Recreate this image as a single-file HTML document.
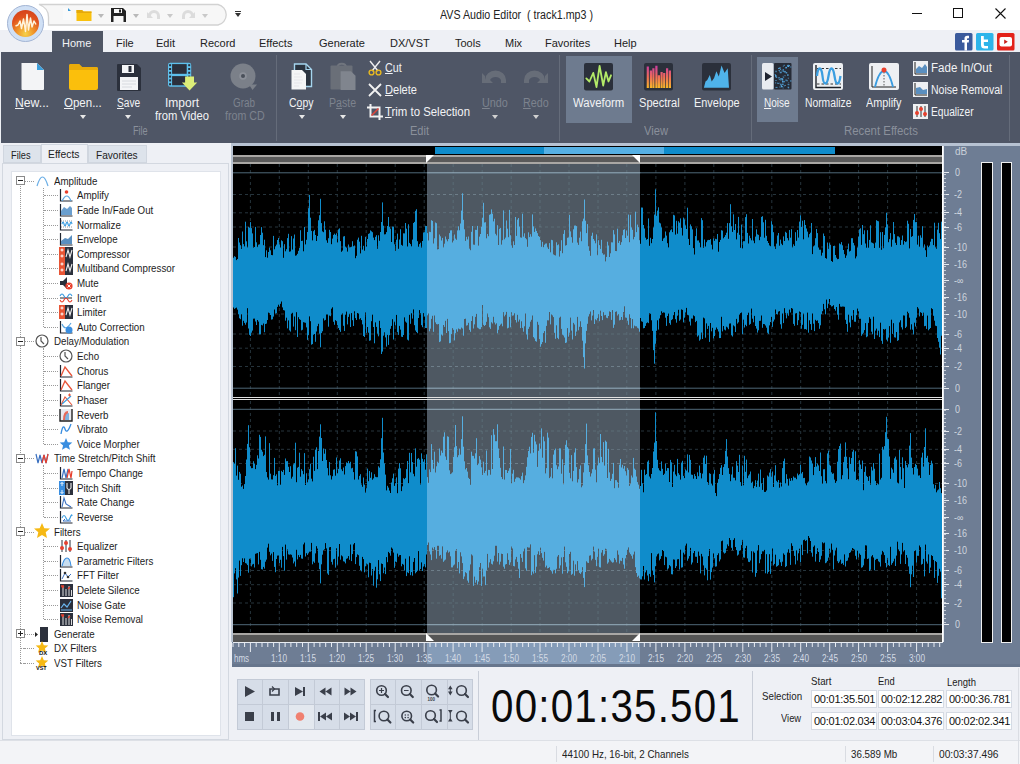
<!DOCTYPE html>
<html><head><meta charset="utf-8">
<style>
*{margin:0;padding:0;box-sizing:border-box}
html,body{width:1020px;height:764px;overflow:hidden;background:#fff;font-family:"Liberation Sans",sans-serif;font-size:11px;color:#1a1a1a}
.a{position:absolute}
.t{position:absolute;white-space:nowrap;line-height:1}
#title{left:0;top:0;width:1020px;height:31px;background:#fff}
#menubar{left:0;top:30px;width:1020px;height:22px;background:#eef0f5}
#ribbon{left:0;top:52px;width:1020px;height:91px;background:#4f5666}
.rt{color:#f2f3f5;font-size:12px}
.rd{color:#7d838e;font-size:12px}
.gl{color:#8a909b;font-size:12px}
.sep{position:absolute;width:1px;background:#656c7a;top:3px;height:86px}
.dd{position:absolute;width:0;height:0;border-left:3px solid transparent;border-right:3px solid transparent;border-top:4px solid #e8e8e8}
.mt{position:absolute;top:38px;font-size:11px;color:#222;line-height:1}
#left{left:0;top:143px;width:232px;height:597px;background:#eef0f5}
#wave{left:233px;top:146px;width:709px;height:487px;background:#000}
#db{left:943px;top:146px;width:77px;height:521px;background:#6e7d94}
#ruler{left:232px;top:642px;width:711px;height:25px;background:#6e7d94}
#bottom{left:232px;top:667px;width:788px;height:73px;background:#eef0f5}
#status{left:0;top:740px;width:1020px;height:24px;background:#f3f4f7;border-top:1px solid #dde0e6}
.tr{position:absolute;height:15px;line-height:15px;font-size:11px;color:#1c1c1c;white-space:nowrap;transform:scaleX(0.885);transform-origin:0 50%}
.ic{position:absolute;width:14px;height:14px}
.cell{position:absolute;width:25px;height:25px;background:#d6dde8;border-right:1px solid #c3cad6;border-bottom:1px solid #c3cad6}
.fld{position:absolute;height:18px;width:66px;background:#fff;border:1px solid #d5dae3;font-size:11px;line-height:16px;padding-left:2px;color:#111;letter-spacing:-0.25px;white-space:nowrap}
</style></head><body>

<!-- TITLE BAR -->
<div id="title" class="a">
  <!-- logo -->
  <div class="a" style="left:7px;top:5px;width:37px;height:37px;border-radius:50%;background:#d0e0f5;border:1px solid #a3b5d4;z-index:3"></div>
  <div class="a" style="left:12px;top:10px;width:27px;height:27px;border-radius:50%;background:radial-gradient(circle at 50% 88%,#f6d24a 0%,#f0962a 30%,#e0521e 62%,#cf3a18 100%);z-index:4"></div>
  <svg class="a" style="left:12px;top:10px;z-index:5" width="27" height="27" viewBox="0 0 27 27"><path d="M3.5 16 L6 15 L8 11 L9.5 18.5 L11.5 9 L13.5 21.5 L15 4.5 L16.5 20 L18.5 8 L20 17 L22 11 L24 14.5" fill="none" stroke="#fff3dc" stroke-width="1.5" stroke-linejoin="round"/></svg>
  <!-- quick access pill -->
  <svg class="a" style="left:0;top:0" width="240" height="30"><path d="M39 4.5 H218 A10.5 10.5 0 0 1 218 25 H48.5 V17 Q48.5 8 39 4.5Z" fill="#f7f7f7" stroke="#d2d2d2" stroke-width="1.3"/></svg>
  <svg class="a" style="left:62px;top:7px" width="10" height="14"><path d="M1 1 H6 L9 4 V13 H1Z" fill="#fafafa"/><path d="M6 1 L9 4 H6Z" fill="#3d9bd8"/></svg>
  <svg class="a" style="left:76px;top:8px" width="16" height="14"><path d="M0.5 2 H6 L7.5 3.5 H15.5 V13 H0.5Z" fill="#f9c10f"/><path d="M0.5 2 H6 L7.5 3.5 H15.5 V5 H0.5Z" fill="#e5a90a"/></svg>
  <div class="dd" style="left:98px;top:14px;border-top-color:#b9b9b9"></div>
  <svg class="a" style="left:111px;top:8px" width="15" height="14"><path d="M0 0 H12 L15 3 V14 H0Z" fill="#222"/><rect x="3" y="1" width="8" height="4" fill="#f7f7f7"/><rect x="8" y="1.5" width="2" height="3" fill="#222"/><rect x="2.5" y="8" width="10" height="6" fill="#f7f7f7"/></svg>
  <div class="dd" style="left:133px;top:14px;border-top-color:#b9b9b9"></div>
  <svg class="a" style="left:146px;top:9px" width="15" height="12"><path d="M2 7 A6 6 0 0 1 14 7 V10 H11 V7 A3 3 0 0 0 5 7 L7 9 H1 V3 L3 5" fill="#dcdcdc"/></svg>
  <div class="dd" style="left:167px;top:14px;border-top-color:#c9c9c9"></div>
  <svg class="a" style="left:181px;top:9px" width="15" height="12"><path d="M13 7 A6 6 0 0 0 1 7 V10 H4 V7 A3 3 0 0 1 10 7 L8 9 H14 V3 L12 5" fill="#dcdcdc"/></svg>
  <div class="dd" style="left:202px;top:14px;border-top-color:#c9c9c9"></div>
  <div class="a" style="left:235px;top:11px;width:6px;height:1px;background:#333"></div>
  <div class="dd" style="left:235px;top:13px;border-top-color:#333;border-left-width:3px;border-right-width:3px"></div>
  <div class="t" style="left:440px;top:9px;font-size:12px;color:#222;transform:scaleX(0.89);transform-origin:0 0">AVS Audio Editor&nbsp; ( track1.mp3 )</div>
  <!-- window controls -->
  <div class="a" style="left:912px;top:13px;width:10px;height:1px;background:#111"></div>
  <div class="a" style="left:953px;top:8px;width:10px;height:10px;border:1px solid #111"></div>
  <svg class="a" style="left:995px;top:8px" width="11" height="11"><path d="M0.5 0.5 L10.5 10.5 M10.5 0.5 L0.5 10.5" stroke="#111" stroke-width="1.1"/></svg>
</div>

<!-- MENU BAR -->
<div id="menubar" class="a"></div>
<div class="a" style="left:52px;top:31px;width:51px;height:21px;background:#4f5665"></div>
<div class="mt" style="left:62px;color:#f2f3f5">Home</div>
<div class="mt" style="left:116px">File</div>
<div class="mt" style="left:156px">Edit</div>
<div class="mt" style="left:200px">Record</div>
<div class="mt" style="left:259px">Effects</div>
<div class="mt" style="left:319px">Generate</div>
<div class="mt" style="left:390px">DX/VST</div>
<div class="mt" style="left:455px">Tools</div>
<div class="mt" style="left:505px">Mix</div>
<div class="mt" style="left:545px">Favorites</div>
<div class="mt" style="left:614px">Help</div>
<!-- social -->
<svg class="a" style="left:955px;top:33px" width="60" height="18">
 <rect x="0" y="0" width="17.5" height="17.5" rx="1.5" fill="#3a5a9c"/>
 <path d="M9.5 17.5 V9.5 H7 V7 H9.5 V5.5 Q9.5 2.8 12.2 2.8 H14 V5.2 H12.8 Q12 5.2 12 6 V7 H14 L13.7 9.5 H12 V17.5Z" fill="#fff"/>
 <rect x="21" y="0" width="17.5" height="17.5" rx="1.5" fill="#2db4ea"/>
 <path d="M26 3 H28.8 V6.5 H33 V9 H28.8 V11.5 Q28.8 13 30.3 13 H33 V15.5 H29.5 Q26 15.5 26 12Z" fill="#fff"/>
 <rect x="42" y="0" width="17.5" height="17.5" rx="1.5" fill="#e3231b"/>
 <rect x="44.5" y="4" width="12.5" height="9.5" rx="2" fill="#fff"/>
 <path d="M49.2 6.5 L52.8 8.75 L49.2 11Z" fill="#c9201a"/>
</svg>
<!-- RIBBON -->
<div id="ribbon" class="a">
<!-- File group -->
<svg class="a" style="left:20px;top:10px" width="25" height="29"><path d="M1.5 1 H17 L24 8 V27 Q24 28 23 28 H2.5 Q1.5 28 1.5 27Z" fill="#f3f4f6"/><path d="M17 1 L24 8 H17Z" fill="#3d9fdc"/></svg>
<div class="t rt" style="left:15px;top:45px;transform:scaleX(1.018);transform-origin:0 0"><u>N</u>ew...</div>
<svg class="a" style="left:69px;top:12px" width="29" height="26"><path d="M0 2 Q0 0 2 0 H10 L13 3 H27 Q29 3 29 5 V24 Q29 26 27 26 H2 Q0 26 0 24Z" fill="#fbbf0c"/><path d="M0 6 H29 V5 Q29 3 27 3 H13 L10 0 H2 Q0 0 0 2Z" fill="#e9ab0a"/></svg>
<div class="t rt" style="left:64px;top:45px;transform:scaleX(0.959);transform-origin:0 0"><u>O</u>pen...</div>
<div class="dd" style="left:80px;top:63px"></div>
<svg class="a" style="left:117px;top:12px" width="24" height="27"><path d="M0 1 Q0 0 1 0 H20 L24 4 V26 Q24 27 23 27 H1 Q0 27 0 26Z" fill="#2b303c"/><rect x="5" y="1" width="12" height="8" fill="#f4f5f7"/><rect x="11.5" y="2" width="3" height="6" fill="#2b303c"/><rect x="3" y="13" width="18" height="13" fill="#f4f5f7"/><path d="M5 17 H19 M5 20 H19 M5 23 H15" stroke="#d0d3d9" stroke-width="0.8"/></svg>
<div class="t rt" style="left:117px;top:45px;transform:scaleX(0.847);transform-origin:0 0"><u>S</u>ave</div>
<div class="dd" style="left:125px;top:63px"></div>
<svg class="a" style="left:167px;top:10px" width="32" height="30"><rect x="1" y="0.7" width="23.2" height="24" rx="2.2" fill="#5ec0ec"/><rect x="5.1" y="2.1" width="14.6" height="9.7" fill="#2b303c"/><rect x="5.1" y="14.1" width="14.6" height="9.2" fill="#2b303c"/><rect x="2.1" y="2.2" width="2" height="2" fill="#2b303c"/><rect x="21.2" y="2.2" width="2" height="2" fill="#2b303c"/><rect x="2.1" y="6.0" width="2" height="2" fill="#2b303c"/><rect x="21.2" y="6.0" width="2" height="2" fill="#2b303c"/><rect x="2.1" y="9.8" width="2" height="2" fill="#2b303c"/><rect x="21.2" y="9.8" width="2" height="2" fill="#2b303c"/><rect x="2.1" y="13.6" width="2" height="2" fill="#2b303c"/><rect x="21.2" y="13.6" width="2" height="2" fill="#2b303c"/><rect x="2.1" y="17.4" width="2" height="2" fill="#2b303c"/><rect x="21.2" y="17.4" width="2" height="2" fill="#2b303c"/><rect x="2.1" y="21.2" width="2" height="2" fill="#2b303c"/><rect x="21.2" y="21.2" width="2" height="2" fill="#2b303c"/><path d="M18.1 14.6 H27 V20.5 H30.2 L22.55 28.6 L14.9 20.5 H18.1Z" fill="#dcee78"/></svg>
<div class="t rt" style="left:165px;top:45px;transform:scaleX(1.000);transform-origin:0 0">Import</div>
<div class="t rt" style="left:155px;top:58px;transform:scaleX(0.934);transform-origin:0 0">from Video</div>
<svg class="a" style="left:230px;top:11px" width="30" height="30"><circle cx="13" cy="13" r="12.5" fill="#7b8089"/><circle cx="13" cy="13" r="3.8" fill="#8c9099"/><circle cx="13" cy="13" r="2" fill="#4a505a"/><path d="M19 21.5 L27 21.5 L22.5 27Z" fill="#7b8089"/></svg>
<div class="t rd" style="left:233px;top:45px;transform:scaleX(0.824);transform-origin:0 0">Grab</div>
<div class="t rd" style="left:225px;top:58px;transform:scaleX(0.888);transform-origin:0 0">from CD</div>
<div class="t gl" style="left:133px;top:73px;transform:scaleX(0.76);transform-origin:0 0">File</div>
<div class="sep" style="left:276px"></div>

<!-- Edit group -->
<svg class="a" style="left:290px;top:11px" width="23" height="28"><path d="M4.5 1 H16 L21.5 6.5 V23.5 H4.5Z" fill="#2b3440" stroke="#a5d5ee" stroke-width="1.4"/><path d="M16 1 V6.5 H21.5" fill="none" stroke="#a5d5ee" stroke-width="1.2"/><path d="M1.5 7 H12 L16 11 V26.5 H1.5Z" fill="#f4f5f6"/><path d="M4 11 H10 M4 14 H12 M4 17 H13 M4 20 H12 M4 23 H9" stroke="#dfe1e5" stroke-width="0.7"/></svg>
<div class="t rt" style="left:289px;top:45px;transform:scaleX(0.875);transform-origin:0 0">C<u>o</u>py</div>
<div class="dd" style="left:299px;top:63px"></div>
<svg class="a" style="left:330px;top:9px" width="27" height="30"><path d="M7.5 6.5 Q7.5 2.8 11.8 2.8 Q16 2.8 16 6.5" fill="none" stroke="#70757e" stroke-width="2"/><rect x="0.5" y="4.5" width="22" height="24" rx="1" fill="#6a6f78"/><path d="M10.6 10.3 H21 L25.5 14.8 V29 H10.6Z" fill="#80858e"/></svg>
<div class="t rd" style="left:329px;top:45px;transform:scaleX(0.883);transform-origin:0 0">P<u>a</u>ste</div>
<div class="dd" style="left:340px;top:63px"></div>
<svg class="a" style="left:368px;top:8px" width="14" height="16"><path d="M2 1 L10 11 M12 1 L4 11" stroke="#f0f0f0" stroke-width="1.4"/><circle cx="3.5" cy="12.5" r="2.4" fill="none" stroke="#e8b920" stroke-width="1.4"/><circle cx="10.5" cy="12.5" r="2.4" fill="none" stroke="#e8b920" stroke-width="1.4"/></svg>
<div class="t rt" style="left:385px;top:10px;transform:scaleX(0.893);transform-origin:0 0"><u>C</u>ut</div>
<svg class="a" style="left:368px;top:31px" width="14" height="14"><path d="M1 1 L13 13 M13 1 L1 13" stroke="#f2f2f2" stroke-width="1.8"/></svg>
<div class="t rt" style="left:385px;top:32px;transform:scaleX(0.922);transform-origin:0 0"><u>D</u>elete</div>
<svg class="a" style="left:367px;top:52px" width="16" height="16"><path d="M3.5 0 V12.5 H16 M0 3.5 H12.5 V16" fill="none" stroke="#f2f2f2" stroke-width="2"/><path d="M4.5 11.5 L11.5 4.5" stroke="#e0443a" stroke-width="1.6"/></svg>
<div class="t rt" style="left:385px;top:54px;transform:scaleX(0.949);transform-origin:0 0"><u>T</u>rim to Selection</div>
<div class="t gl" style="left:410px;top:73px;transform:scaleX(0.92);transform-origin:0 0">Edit</div>
<svg class="a" style="left:481px;top:16px" width="27" height="16"><path d="M4 12 A10 9 0 0 1 25 12 V15 H20 V12 A6 5 0 0 0 9 12 L12 15 H1 V5 L4 8" fill="#676d78"/></svg>
<div class="t rd" style="left:482px;top:45px;transform:scaleX(0.899);transform-origin:0 0"><u>U</u>ndo</div>
<div class="dd" style="left:492px;top:63px;border-top-color:#d0d0d0"></div>
<svg class="a" style="left:522px;top:16px" width="27" height="16"><path d="M23 12 A10 9 0 0 0 2 12 V15 H7 V12 A6 5 0 0 1 18 12 L15 15 H26 V5 L23 8" fill="#676d78"/></svg>
<div class="t rd" style="left:523px;top:45px;transform:scaleX(0.892);transform-origin:0 0"><u>R</u>edo</div>
<div class="dd" style="left:533px;top:63px;border-top-color:#d0d0d0"></div>
<div class="sep" style="left:559px"></div>

<!-- View group -->
<div class="a" style="left:566px;top:4px;width:66px;height:67px;background:#6e7b8f"></div>
<svg class="a" style="left:584px;top:11px" width="29" height="28"><rect width="29" height="27.5" rx="2" fill="#2b303b"/><path d="M2.3 15.4 L5.4 18.5 L9.3 9.9 L12.5 24 L15.6 3 L19.2 22.5 L21.9 9.1 L24.5 18.5 L27 12.3" fill="none" stroke="#b3ea68" stroke-width="1.8" stroke-linejoin="round" stroke-linecap="round"/></svg>
<div class="t rt" style="left:573px;top:45px;transform:scaleX(0.945);transform-origin:0 0">Waveform</div>
<svg class="a" style="left:644px;top:11px" width="29" height="28"><defs><linearGradient id="sg" gradientUnits="userSpaceOnUse" x1="0" y1="2" x2="0" y2="25"><stop offset="0" stop-color="#c83aa8"/><stop offset="0.5" stop-color="#ee6a5a"/><stop offset="1" stop-color="#f8b828"/></linearGradient></defs><rect width="29" height="27.5" rx="2" fill="#2b303b"/><path d="M3.8 25V3.6 M6.9 25V7.5 M9.4 25V5.2 M12.4 25V2.8 M14.9 25V12.3 M17.6 25V9.1 M20.2 25V9.9 M23.1 25V5.2 M25.9 25V7.5" stroke="url(#sg)" stroke-width="2.2"/></svg>
<div class="t rt" style="left:639px;top:45px;transform:scaleX(0.923);transform-origin:0 0">Spectral</div>
<svg class="a" style="left:702px;top:11px" width="29" height="28"><rect width="29" height="27.5" rx="2" fill="#2b303b"/><path d="M1.9 24.8 L3.5 18.5 L5.3 17 L7.8 12 L9.7 18.5 L12.1 15 L14.4 8.3 L16.8 13.5 L19.5 2.5 L22.6 9.9 L25.7 5.2 L27 24.8Z" fill="#4fb3ea"/></svg>
<div class="t rt" style="left:694px;top:45px;transform:scaleX(0.910);transform-origin:0 0">Envelope</div>
<div class="t gl" style="left:644px;top:73px;transform:scaleX(0.93);transform-origin:0 0">View</div>
<div class="sep" style="left:751px"></div>

<!-- Recent Effects -->
<div class="a" style="left:757px;top:5px;width:41px;height:65px;background:#6e7b8f"></div>
<svg class="a" style="left:762px;top:11px" width="30" height="27"><rect x="0" y="0" width="11.5" height="26.5" rx="1.5" fill="#e8ebf0"/><rect x="12" y="0" width="17.5" height="26.5" rx="1" fill="#262b36"/><path d="M3 9 L10 13.5 L3 18Z" fill="#1f2430"/><rect x="16.3" y="14.0" width="1.5" height="1.5" fill="#5ab4f0" opacity="0.68"/><rect x="20.1" y="14.9" width="1" height="1" fill="#5ab4f0" opacity="0.80"/><rect x="16.6" y="6.9" width="1" height="1" fill="#5ab4f0" opacity="1.00"/><rect x="21.2" y="14.1" width="1" height="1" fill="#5ab4f0" opacity="0.70"/><rect x="16.2" y="5.0" width="1" height="1" fill="#5ab4f0" opacity="0.96"/><rect x="24.4" y="16.9" width="1.5" height="1.5" fill="#5ab4f0" opacity="0.53"/><rect x="13.2" y="19.4" width="1" height="1" fill="#5ab4f0" opacity="0.91"/><rect x="20.1" y="18.0" width="1.5" height="1.5" fill="#5ab4f0" opacity="0.94"/><rect x="25.1" y="11.3" width="1.5" height="1.5" fill="#5ab4f0" opacity="0.86"/><rect x="19.6" y="23.0" width="1" height="1" fill="#5ab4f0" opacity="0.94"/><rect x="13.1" y="12.9" width="1.5" height="1.5" fill="#5ab4f0" opacity="0.63"/><rect x="19.5" y="15.9" width="1.5" height="1.5" fill="#5ab4f0" opacity="0.65"/><rect x="25.8" y="14.7" width="1" height="1" fill="#5ab4f0" opacity="0.77"/><rect x="21.8" y="22.3" width="1" height="1" fill="#5ab4f0" opacity="0.84"/><rect x="26.2" y="24.3" width="1" height="1" fill="#5ab4f0" opacity="0.84"/><rect x="23.7" y="9.0" width="1.5" height="1.5" fill="#5ab4f0" opacity="0.77"/><rect x="21.6" y="17.9" width="1.5" height="1.5" fill="#5ab4f0" opacity="0.61"/><rect x="16.8" y="4.4" width="1.5" height="1.5" fill="#5ab4f0" opacity="0.74"/><rect x="28.3" y="3.5" width="1" height="1" fill="#5ab4f0" opacity="0.90"/><rect x="26.9" y="2.0" width="1" height="1" fill="#5ab4f0" opacity="0.71"/><rect x="26.5" y="2.5" width="1" height="1" fill="#5ab4f0" opacity="0.81"/><rect x="18.5" y="15.0" width="1" height="1" fill="#5ab4f0" opacity="0.78"/><rect x="20.6" y="24.5" width="1" height="1" fill="#5ab4f0" opacity="0.65"/><rect x="14.2" y="13.8" width="1" height="1" fill="#5ab4f0" opacity="0.97"/><rect x="17.2" y="7.6" width="1" height="1" fill="#5ab4f0" opacity="0.84"/><rect x="17.5" y="23.5" width="1" height="1" fill="#5ab4f0" opacity="0.95"/><rect x="18.5" y="21.5" width="1.5" height="1.5" fill="#5ab4f0" opacity="0.69"/><rect x="23.4" y="3.9" width="1.5" height="1.5" fill="#5ab4f0" opacity="0.99"/><rect x="16.8" y="16.1" width="1" height="1" fill="#5ab4f0" opacity="0.86"/><rect x="19.5" y="7.4" width="1" height="1" fill="#5ab4f0" opacity="0.65"/><rect x="12.7" y="11.0" width="1" height="1" fill="#5ab4f0" opacity="0.79"/><rect x="18.5" y="15.1" width="1.5" height="1.5" fill="#5ab4f0" opacity="0.57"/><rect x="22.5" y="12.2" width="1" height="1" fill="#5ab4f0" opacity="0.84"/><rect x="22.2" y="7.9" width="1.5" height="1.5" fill="#5ab4f0" opacity="0.74"/><rect x="13.5" y="17.0" width="1" height="1" fill="#5ab4f0" opacity="0.98"/><rect x="22.5" y="8.4" width="1" height="1" fill="#5ab4f0" opacity="0.80"/><rect x="18.3" y="8.7" width="1.5" height="1.5" fill="#5ab4f0" opacity="0.68"/><rect x="16.7" y="19.6" width="1" height="1" fill="#5ab4f0" opacity="0.55"/><rect x="28.0" y="17.2" width="1.5" height="1.5" fill="#5ab4f0" opacity="0.57"/><rect x="16.1" y="20.0" width="1" height="1" fill="#5ab4f0" opacity="0.62"/><rect x="23.3" y="16.4" width="1.5" height="1.5" fill="#5ab4f0" opacity="0.55"/><rect x="17.7" y="9.2" width="1" height="1" fill="#5ab4f0" opacity="0.92"/><rect x="25.5" y="23.6" width="1.5" height="1.5" fill="#5ab4f0" opacity="0.54"/><rect x="22.9" y="21.9" width="1" height="1" fill="#5ab4f0" opacity="0.73"/><rect x="25.1" y="2.3" width="1" height="1" fill="#5ab4f0" opacity="0.98"/><rect x="25.4" y="20.8" width="1" height="1" fill="#5ab4f0" opacity="0.59"/><rect x="17.9" y="20.5" width="1.5" height="1.5" fill="#5ab4f0" opacity="0.54"/><rect x="18.0" y="4.5" width="1" height="1" fill="#5ab4f0" opacity="0.65"/><rect x="19.9" y="16.1" width="1.5" height="1.5" fill="#5ab4f0" opacity="0.65"/><rect x="19.1" y="22.7" width="1" height="1" fill="#5ab4f0" opacity="0.58"/><rect x="20.1" y="20.6" width="1.5" height="1.5" fill="#5ab4f0" opacity="0.81"/><rect x="19.4" y="23.4" width="1" height="1" fill="#5ab4f0" opacity="0.96"/><rect x="13.0" y="12.0" width="1.5" height="1.5" fill="#5ab4f0" opacity="0.88"/><rect x="20.8" y="8.1" width="1" height="1" fill="#5ab4f0" opacity="0.67"/><rect x="26.3" y="21.2" width="1" height="1" fill="#5ab4f0" opacity="0.99"/><rect x="25.5" y="2.5" width="1.5" height="1.5" fill="#5ab4f0" opacity="0.95"/><rect x="20.7" y="6.1" width="1" height="1" fill="#5ab4f0" opacity="0.94"/><rect x="21.7" y="1.8" width="1" height="1" fill="#5ab4f0" opacity="0.87"/><rect x="20.6" y="7.0" width="1.5" height="1.5" fill="#5ab4f0" opacity="0.51"/><rect x="19.1" y="23.1" width="1" height="1" fill="#5ab4f0" opacity="0.81"/><rect x="14.5" y="23.9" width="1" height="1" fill="#5ab4f0" opacity="0.77"/><rect x="18.1" y="6.0" width="1" height="1" fill="#5ab4f0" opacity="0.77"/><rect x="15.2" y="19.7" width="1" height="1" fill="#5ab4f0" opacity="0.96"/><rect x="25.7" y="1.7" width="1" height="1" fill="#5ab4f0" opacity="0.81"/><rect x="13.3" y="7.7" width="1.5" height="1.5" fill="#5ab4f0" opacity="0.63"/><rect x="20.8" y="2.7" width="1" height="1" fill="#5ab4f0" opacity="0.66"/><rect x="26.2" y="19.3" width="1" height="1" fill="#5ab4f0" opacity="0.52"/><rect x="13.6" y="23.9" width="1" height="1" fill="#5ab4f0" opacity="0.93"/><rect x="20.7" y="12.8" width="1" height="1" fill="#5ab4f0" opacity="0.58"/><rect x="18.1" y="16.4" width="1" height="1" fill="#5ab4f0" opacity="0.79"/></svg>
<div class="t rt" style="left:764px;top:45px;transform:scaleX(0.834);transform-origin:0 0"><u>N</u>oise</div>
<svg class="a" style="left:813px;top:11px" width="30" height="27"><rect width="30" height="27" rx="2" fill="#eef0f3"/><path d="M3 2 V24.5 H28" fill="none" stroke="#1e222a" stroke-width="1.4"/><path d="M4 5.5 H28 M4 21 H28" stroke="#333" stroke-width="1" stroke-dasharray="2.5 2"/><path d="M4 13 C4.8 3 8.5 3 9.5 13 S 14 23 15.5 13 S 20 3 21.5 13 S 26 23 27.5 13" fill="none" stroke="#3c9ee0" stroke-width="2.3"/></svg>
<div class="t rt" style="left:805px;top:45px;transform:scaleX(0.859);transform-origin:0 0">Normalize</div>
<svg class="a" style="left:869px;top:11px" width="30" height="27"><rect width="30" height="27" rx="2" fill="#eef0f3"/><path d="M3 3 V24 H27" fill="none" stroke="#222" stroke-width="1"/><path d="M6 24 Q10 8 15 8 Q20 8 24 24" fill="none" stroke="#3a9ce0" stroke-width="1.8"/><path d="M15 9 V24" stroke="#333" stroke-width="0.8" stroke-dasharray="1.5 1.5"/><circle cx="15" cy="7" r="2.5" fill="#e8402e"/></svg>
<div class="t rt" style="left:866px;top:45px;transform:scaleX(0.903);transform-origin:0 0">Amplify</div>
<svg class="a" style="left:913px;top:9px" width="15" height="15"><rect width="15" height="15" fill="#eef0f3"/><path d="M2 1 V13 H14" fill="none" stroke="#222" stroke-width="1"/><path d="M3 12 V8 L6 5 L9 7 L12 3 L14 6 V12Z" fill="#5a8fc0"/></svg>
<div class="t rt" style="left:931px;top:10px;transform:scaleX(0.962);transform-origin:0 0">Fade In/Out</div>
<svg class="a" style="left:913px;top:30px" width="15" height="15"><rect width="15" height="15" fill="#eef0f3"/><path d="M2 1 V13 H14" fill="none" stroke="#222" stroke-width="1"/><path d="M3 12 V6 L7 5 L10 8 L14 7 V12Z" fill="#5a8fc0"/></svg>
<div class="t rt" style="left:931px;top:32px;transform:scaleX(0.878);transform-origin:0 0">Noise Removal</div>
<svg class="a" style="left:913px;top:52px" width="15" height="15"><rect width="15" height="15" fill="#eef0f3"/><path d="M4 2 V13 M8 2 V13 M12 2 V13" stroke="#333" stroke-width="1"/><circle cx="4" cy="9" r="2" fill="#e8402e"/><circle cx="8" cy="5" r="2" fill="#e8402e"/><circle cx="12" cy="10" r="2" fill="#e8402e"/></svg>
<div class="t rt" style="left:931px;top:54px;transform:scaleX(0.850);transform-origin:0 0">Equalizer</div>
<div class="t gl" style="left:844px;top:73px;transform:scaleX(0.95);transform-origin:0 0">Recent Effects</div>
<div class="sep" style="left:1009px"></div>

</div>

<div class="a" style="left:0;top:52px;width:1px;height:91px;background:#eef0f5"></div>
<!-- LEFT PANEL -->
<div id="left" class="a">
<div class="a" style="left:3px;top:2px;width:38px;height:18px;background:#dde3eb;border:1px solid #d0d6df"></div>
<div class="t" style="left:11px;top:7px;font-size:11px;color:#222;transform:scaleX(0.84);transform-origin:0 0">Files</div>
<div class="a" style="left:41px;top:1px;width:47px;height:20px;background:#eef0f5;border:1px solid #d0d6df;border-bottom:none"></div>
<div class="t" style="left:48px;top:6px;font-size:11px;color:#222;transform:scaleX(0.94);transform-origin:0 0">Effects</div>
<div class="a" style="left:88px;top:2px;width:59px;height:18px;background:#dde3eb;border:1px solid #d0d6df"></div>
<div class="t" style="left:96px;top:7px;font-size:11px;color:#222;transform:scaleX(0.92);transform-origin:0 0">Favorites</div>
<div class="a" style="left:2px;top:20px;width:227px;height:577px;border:1px solid #d3d8e0;background:#eef0f5"></div>
<div class="a" style="left:11px;top:28px;width:210px;height:565px;background:#fff;border:1px solid #dfe3ea"></div>
<div class="a" style="left:20px;top:37.6px;width:1px;height:482.5px;border-left:1px dotted #9a9a9a"></div>
<div class="a" style="left:43px;top:44.6px;width:1px;height:139.2px;border-left:1px dotted #9a9a9a"></div>
<div class="a" style="left:43px;top:205.4px;width:1px;height:95.3px;border-left:1px dotted #9a9a9a"></div>
<div class="a" style="left:43px;top:322.4px;width:1px;height:51.5px;border-left:1px dotted #9a9a9a"></div>
<div class="a" style="left:43px;top:395.5px;width:1px;height:80.7px;border-left:1px dotted #9a9a9a"></div>
<div class="a" style="left:24px;top:37.6px;width:10px;height:1px;border-top:1px dotted #9a9a9a"></div>
<div class="a" style="left:16px;top:33.1px;width:9px;height:9px;background:#fff;border:1px solid #8a8a8a"></div>
<div class="a" style="left:18px;top:37.1px;width:5px;height:1px;background:#222"></div>
<svg class="a" style="left:35px;top:31px;overflow:visible" width="14" height="14"><path d="M2 12 Q7.5 -6 13 12" fill="none" stroke="#6aaee6" stroke-width="1.2"/></svg>
<div class="tr" style="left:54px;top:30.6px">Amplitude</div>
<div class="a" style="left:44px;top:52.2px;width:14px;height:1px;border-top:1px dotted #9a9a9a"></div>
<svg class="a" style="left:59px;top:45px;overflow:visible" width="14" height="14"><path d="M1.5 1 V13 H13.5" fill="none" stroke="#1e2430" stroke-width="1.2"/><path d="M3 13 Q8 3 12 13" fill="none" stroke="#5aa5e0" stroke-width="1.2"/><circle cx="7.5" cy="4" r="1.8" fill="#e8402e"/></svg>
<div class="tr" style="left:77px;top:45.2px">Amplify</div>
<div class="a" style="left:44px;top:66.8px;width:14px;height:1px;border-top:1px dotted #9a9a9a"></div>
<svg class="a" style="left:59px;top:60px;overflow:visible" width="14" height="14"><path d="M1.5 1 V13 H13.5" fill="none" stroke="#1e2430" stroke-width="1.2"/><path d="M2 12 V8 L5 4 L8 6 L11 3 L13 5 V12Z" fill="#6a9fcf"/></svg>
<div class="tr" style="left:77px;top:59.8px">Fade In/Fade Out</div>
<div class="a" style="left:44px;top:81.5px;width:14px;height:1px;border-top:1px dotted #9a9a9a"></div>
<svg class="a" style="left:59px;top:74px;overflow:visible" width="14" height="14"><path d="M1.5 1 V13 H13.5" fill="none" stroke="#1e2430" stroke-width="1.2"/><path d="M2 4 H13 M2 10 H13" stroke="#555" stroke-width="0.6" stroke-dasharray="1 1"/><path d="M3 7 Q4 3 5 7 T7 7 T9 7 T11 7 T13 7" fill="none" stroke="#3a9ce0" stroke-width="1.2"/></svg>
<div class="tr" style="left:77px;top:74.5px">Normalize</div>
<div class="a" style="left:44px;top:96.1px;width:14px;height:1px;border-top:1px dotted #9a9a9a"></div>
<svg class="a" style="left:59px;top:89px;overflow:visible" width="14" height="14"><path d="M1.5 1 V13 H13.5" fill="none" stroke="#1e2430" stroke-width="1.2"/><path d="M2 12 V9 L6 6 L9 7 L13 3 V12Z" fill="#5a8fc0"/></svg>
<div class="tr" style="left:77px;top:89.1px">Envelope</div>
<div class="a" style="left:44px;top:110.7px;width:14px;height:1px;border-top:1px dotted #9a9a9a"></div>
<svg class="a" style="left:59px;top:104px;overflow:visible" width="14" height="14"><rect x="0" y="0" width="6" height="14" fill="#e85535"/><rect x="6" y="0" width="8" height="14" fill="#2b303c"/><path d="M7 10 L9 3 L11 10 L13 3" fill="none" stroke="#eee" stroke-width="1.1"/><path d="M1.5 3 H4.5 M3 1.5 V4.5 M1.5 9 H4.5 M3 7.5 V10.5" stroke="#fff" stroke-width="1"/></svg>
<div class="tr" style="left:77px;top:103.7px">Compressor</div>
<div class="a" style="left:44px;top:125.3px;width:14px;height:1px;border-top:1px dotted #9a9a9a"></div>
<svg class="a" style="left:59px;top:118px;overflow:visible" width="14" height="14"><rect x="0" y="0" width="6" height="14" fill="#e85535"/><rect x="6" y="0" width="8" height="14" fill="#2b303c"/><path d="M7 10 L9 3 L11 10 L13 3" fill="none" stroke="#eee" stroke-width="1.1"/><path d="M1.5 3 H4.5 M3 1.5 V4.5 M1.5 9 H4.5 M3 7.5 V10.5" stroke="#fff" stroke-width="1"/></svg>
<div class="tr" style="left:77px;top:118.3px">Multiband Compressor</div>
<div class="a" style="left:44px;top:139.9px;width:14px;height:1px;border-top:1px dotted #9a9a9a"></div>
<svg class="a" style="left:59px;top:133px;overflow:visible" width="14" height="14"><path d="M1 5 H4 L8 1 V13 L4 9 H1Z" fill="#2b303c"/><circle cx="10" cy="10" r="3.6" fill="#e8402e"/><path d="M8.5 8.5 L11.5 11.5 M11.5 8.5 L8.5 11.5" stroke="#fff" stroke-width="1"/></svg>
<div class="tr" style="left:77px;top:132.9px">Mute</div>
<div class="a" style="left:44px;top:154.6px;width:14px;height:1px;border-top:1px dotted #9a9a9a"></div>
<svg class="a" style="left:59px;top:148px;overflow:visible" width="14" height="14"><path d="M1 7 H13" stroke="#222" stroke-width="1"/><path d="M1 5 Q3 1 5 5 T9 5 T13 5" fill="none" stroke="#3a9ce0" stroke-width="1.1"/><path d="M1 9 Q3 13 5 9 T9 9 T13 9" fill="none" stroke="#e8402e" stroke-width="1.1"/></svg>
<div class="tr" style="left:77px;top:147.6px">Invert</div>
<div class="a" style="left:44px;top:169.2px;width:14px;height:1px;border-top:1px dotted #9a9a9a"></div>
<svg class="a" style="left:59px;top:162px;overflow:visible" width="14" height="14"><rect x="0" y="0" width="6" height="14" fill="#e85535"/><rect x="6" y="0" width="8" height="14" fill="#2b303c"/><path d="M7 10 L9 3 L11 10 L13 3" fill="none" stroke="#eee" stroke-width="1.1"/><path d="M1.5 3 H4.5 M3 1.5 V4.5 M1.5 9 H4.5 M3 7.5 V10.5" stroke="#fff" stroke-width="1"/></svg>
<div class="tr" style="left:77px;top:162.2px">Limiter</div>
<div class="a" style="left:44px;top:183.8px;width:14px;height:1px;border-top:1px dotted #9a9a9a"></div>
<svg class="a" style="left:59px;top:177px;overflow:visible" width="14" height="14"><path d="M1.5 1 V13 H13.5" fill="none" stroke="#1e2430" stroke-width="1.2"/><path d="M3 4 Q6 12 12 3" fill="none" stroke="#5aa5e0" stroke-width="1.2"/><circle cx="10" cy="10" r="3.5" fill="#3a8ee0"/></svg>
<div class="tr" style="left:77px;top:176.8px">Auto Correction</div>
<div class="a" style="left:24px;top:198.4px;width:10px;height:1px;border-top:1px dotted #9a9a9a"></div>
<div class="a" style="left:16px;top:193.9px;width:9px;height:9px;background:#fff;border:1px solid #8a8a8a"></div>
<div class="a" style="left:18px;top:197.9px;width:5px;height:1px;background:#222"></div>
<svg class="a" style="left:35px;top:191px;overflow:visible" width="14" height="14"><circle cx="7" cy="7" r="6" fill="none" stroke="#555" stroke-width="1.2"/><path d="M6 3 V7 L9 10" fill="none" stroke="#555" stroke-width="1.2"/></svg>
<div class="tr" style="left:54px;top:191.4px">Delay/Modulation</div>
<div class="a" style="left:44px;top:213.0px;width:14px;height:1px;border-top:1px dotted #9a9a9a"></div>
<svg class="a" style="left:59px;top:206px;overflow:visible" width="14" height="14"><circle cx="7" cy="7" r="6" fill="none" stroke="#555" stroke-width="1.2"/><path d="M6 3 V7 L9 10" fill="none" stroke="#555" stroke-width="1.2"/></svg>
<div class="tr" style="left:77px;top:206.0px">Echo</div>
<div class="a" style="left:44px;top:227.7px;width:14px;height:1px;border-top:1px dotted #9a9a9a"></div>
<svg class="a" style="left:59px;top:221px;overflow:visible" width="14" height="14"><path d="M1.5 1 V13 H13.5" fill="none" stroke="#1e2430" stroke-width="1.2"/><path d="M2 12 L6 3 L13 12" fill="none" stroke="#e8553a" stroke-width="1.3"/></svg>
<div class="tr" style="left:77px;top:220.7px">Chorus</div>
<div class="a" style="left:44px;top:242.3px;width:14px;height:1px;border-top:1px dotted #9a9a9a"></div>
<svg class="a" style="left:59px;top:235px;overflow:visible" width="14" height="14"><path d="M1.5 1 V13 H13.5" fill="none" stroke="#1e2430" stroke-width="1.2"/><path d="M2 12 L6 3 L13 12" fill="none" stroke="#e8553a" stroke-width="1.3"/></svg>
<div class="tr" style="left:77px;top:235.3px">Flanger</div>
<div class="a" style="left:44px;top:256.9px;width:14px;height:1px;border-top:1px dotted #9a9a9a"></div>
<svg class="a" style="left:59px;top:250px;overflow:visible" width="14" height="14"><path d="M1.5 1 V13 H13.5" fill="none" stroke="#1e2430" stroke-width="1.2"/><path d="M2 12 L6 4 L13 12" fill="none" stroke="#e8553a" stroke-width="1.1"/><path d="M3 11 L12 3" stroke="#3a9ce0" stroke-width="1.1"/><path d="M9 2 L12 2 M10.5 0.5 V3.5" stroke="#e8553a" stroke-width="1"/></svg>
<div class="tr" style="left:77px;top:249.9px">Phaser</div>
<div class="a" style="left:44px;top:271.5px;width:14px;height:1px;border-top:1px dotted #9a9a9a"></div>
<svg class="a" style="left:59px;top:265px;overflow:visible" width="14" height="14"><rect x="1" y="1" width="12" height="12" fill="#e9e9ef"/><path d="M1 1 V13 H13 V1" fill="none" stroke="#222" stroke-width="1.4"/><path d="M4 12 Q4 3 9 3 V12Z" fill="#e86a5a"/><path d="M6 12 Q6 5 10 5 V12Z" fill="#7fb3e0"/></svg>
<div class="tr" style="left:77px;top:264.5px">Reverb</div>
<div class="a" style="left:44px;top:286.1px;width:14px;height:1px;border-top:1px dotted #9a9a9a"></div>
<svg class="a" style="left:59px;top:279px;overflow:visible" width="14" height="14"><path d="M2 12 Q4 1 6 7 Q8 13 12 2" fill="none" stroke="#3a8ee0" stroke-width="1.3"/></svg>
<div class="tr" style="left:77px;top:279.1px">Vibrato</div>
<div class="a" style="left:44px;top:300.8px;width:14px;height:1px;border-top:1px dotted #9a9a9a"></div>
<svg class="a" style="left:59px;top:294px;overflow:visible" width="14" height="14"><path d="M7 1 L8.8 5.2 L13.3 5.5 L9.9 8.4 L11 12.8 L7 10.5 L3 12.8 L4.1 8.4 L0.7 5.5 L5.2 5.2Z" fill="#3a8ee0"/></svg>
<div class="tr" style="left:77px;top:293.8px">Voice Morpher</div>
<div class="a" style="left:24px;top:315.4px;width:10px;height:1px;border-top:1px dotted #9a9a9a"></div>
<div class="a" style="left:16px;top:310.9px;width:9px;height:9px;background:#fff;border:1px solid #8a8a8a"></div>
<div class="a" style="left:18px;top:314.9px;width:5px;height:1px;background:#222"></div>
<svg class="a" style="left:35px;top:308px;overflow:visible" width="14" height="14"><path d="M1 3 L3 12 L5 4 L7 12 L9 4 L11 12 L13 3" fill="none" stroke="#3a70c0" stroke-width="1.2"/><path d="M7 12 L9 4 L11 12 L13 3" fill="none" stroke="#e8402e" stroke-width="1.2"/></svg>
<div class="tr" style="left:54px;top:308.4px">Time Stretch/Pitch Shift</div>
<div class="a" style="left:44px;top:330.0px;width:14px;height:1px;border-top:1px dotted #9a9a9a"></div>
<svg class="a" style="left:59px;top:323px;overflow:visible" width="14" height="14"><path d="M1.5 1 V13 H13.5" fill="none" stroke="#1e2430" stroke-width="1.2"/><path d="M3 12 L5 3 L7 12 L9 3" fill="none" stroke="#3a70c0" stroke-width="1.2"/><path d="M8 12 L10 3 L12 12 L13 5" fill="none" stroke="#e8402e" stroke-width="1.2"/></svg>
<div class="tr" style="left:77px;top:323.0px">Tempo Change</div>
<div class="a" style="left:44px;top:344.6px;width:14px;height:1px;border-top:1px dotted #9a9a9a"></div>
<svg class="a" style="left:59px;top:338px;overflow:visible" width="14" height="14"><rect x="0" y="0" width="6" height="14" fill="#3a8ee0"/><rect x="6" y="0" width="8" height="14" fill="#2b303c"/><path d="M8 2 V7 Q10 10 12 7 V2 M10 9 V13" fill="none" stroke="#eee" stroke-width="1.1"/><path d="M3 1.5 V5 M1.5 3 L3 1.5 L4.5 3 M3 9 V12.5 M1.5 11 L3 12.5 L4.5 11" fill="none" stroke="#fff" stroke-width="0.9"/></svg>
<div class="tr" style="left:77px;top:337.6px">Pitch Shift</div>
<div class="a" style="left:44px;top:359.2px;width:14px;height:1px;border-top:1px dotted #9a9a9a"></div>
<svg class="a" style="left:59px;top:352px;overflow:visible" width="14" height="14"><path d="M1.5 1 V13 H13.5" fill="none" stroke="#1e2430" stroke-width="1.2"/><path d="M3 12 L5 3 L7 9 L12 12" fill="none" stroke="#3a70c0" stroke-width="1.1"/></svg>
<div class="tr" style="left:77px;top:352.2px">Rate Change</div>
<div class="a" style="left:44px;top:373.9px;width:14px;height:1px;border-top:1px dotted #9a9a9a"></div>
<svg class="a" style="left:59px;top:367px;overflow:visible" width="14" height="14"><path d="M1.5 1 V13 H13.5" fill="none" stroke="#1e2430" stroke-width="1.2"/><path d="M3 8 Q5 3 7 8 T11 8 T13 6" fill="none" stroke="#3a9ce0" stroke-width="1.1"/><path d="M12 11 H4 L6 9" fill="none" stroke="#3a70c0" stroke-width="1"/></svg>
<div class="tr" style="left:77px;top:366.9px">Reverse</div>
<div class="a" style="left:24px;top:388.5px;width:10px;height:1px;border-top:1px dotted #9a9a9a"></div>
<div class="a" style="left:16px;top:384.0px;width:9px;height:9px;background:#fff;border:1px solid #8a8a8a"></div>
<div class="a" style="left:18px;top:388.0px;width:5px;height:1px;background:#222"></div>
<svg class="a" style="left:35px;top:381px;overflow:visible" width="14" height="14"><path d="M8 0 L10.3 5.2 L16 5.6 L11.7 9.3 L13 15 L8 12 L3 15 L4.3 9.3 L0 5.6 L5.7 5.2Z" fill="#f6b914" transform="translate(-1,-1)"/></svg>
<div class="tr" style="left:54px;top:381.5px">Filters</div>
<div class="a" style="left:44px;top:403.1px;width:14px;height:1px;border-top:1px dotted #9a9a9a"></div>
<svg class="a" style="left:59px;top:396px;overflow:visible" width="14" height="14"><path d="M3 1 V13 M7 1 V13 M11 1 V13" stroke="#2b303c" stroke-width="1"/><circle cx="3" cy="9" r="2" fill="#e8402e"/><circle cx="7" cy="4" r="2" fill="#e8402e"/><circle cx="11" cy="10" r="2" fill="#e8402e"/></svg>
<div class="tr" style="left:77px;top:396.1px">Equalizer</div>
<div class="a" style="left:44px;top:417.7px;width:14px;height:1px;border-top:1px dotted #9a9a9a"></div>
<svg class="a" style="left:59px;top:411px;overflow:visible" width="14" height="14"><path d="M1.5 1 V13 H13.5" fill="none" stroke="#1e2430" stroke-width="1.2"/><path d="M3 12 Q5 4 8 4 Q11 4 12 12" fill="#c8ddef" stroke="#3a8ee0" stroke-width="1.1"/></svg>
<div class="tr" style="left:77px;top:410.7px">Parametric Filters</div>
<div class="a" style="left:44px;top:432.3px;width:14px;height:1px;border-top:1px dotted #9a9a9a"></div>
<svg class="a" style="left:59px;top:425px;overflow:visible" width="14" height="14"><path d="M1.5 1 V13 H13.5" fill="none" stroke="#1e2430" stroke-width="1.2"/><path d="M3 11 L6 5 L9 9 L12 6" fill="none" stroke="#3a70c0" stroke-width="1"/><circle cx="6" cy="5" r="1.3" fill="#333"/><circle cx="9" cy="9" r="1.3" fill="#333"/></svg>
<div class="tr" style="left:77px;top:425.3px">FFT Filter</div>
<div class="a" style="left:44px;top:447.0px;width:14px;height:1px;border-top:1px dotted #9a9a9a"></div>
<svg class="a" style="left:59px;top:440px;overflow:visible" width="14" height="14"><rect x="1" y="1" width="13" height="13" fill="#2b303c"/><path d="M4 13 V4 M7 13 V6 M10 13 V3 M12.5 13 V7" stroke="#ddd" stroke-width="1"/><path d="M3 5 L5 3 M9 6 L11 4 M2 3 H5" stroke="#e8402e" stroke-width="1.4"/></svg>
<div class="tr" style="left:77px;top:440.0px">Delete Silence</div>
<div class="a" style="left:44px;top:461.6px;width:14px;height:1px;border-top:1px dotted #9a9a9a"></div>
<svg class="a" style="left:59px;top:455px;overflow:visible" width="14" height="14"><rect x="1" y="1" width="13" height="13" fill="#2b303c"/><path d="M2 10 L5 6 L8 9 L12 3" fill="none" stroke="#6ab6f0" stroke-width="1.2"/><path d="M2 12 H13" stroke="#6ab6f0" stroke-width="1"/></svg>
<div class="tr" style="left:77px;top:454.6px">Noise Gate</div>
<div class="a" style="left:44px;top:476.2px;width:14px;height:1px;border-top:1px dotted #9a9a9a"></div>
<svg class="a" style="left:59px;top:469px;overflow:visible" width="14" height="14"><rect x="1" y="1" width="13" height="13" fill="#2b303c"/><path d="M4 13 V4 M7 13 V6 M10 13 V3 M12.5 13 V7" stroke="#ddd" stroke-width="1"/><path d="M3 5 L5 3 M9 6 L11 4 M2 3 H5" stroke="#e8402e" stroke-width="1.4"/></svg>
<div class="tr" style="left:77px;top:469.2px">Noise Removal</div>
<div class="a" style="left:24px;top:490.8px;width:10px;height:1px;border-top:1px dotted #9a9a9a"></div>
<div class="a" style="left:16px;top:486.3px;width:9px;height:9px;background:#fff;border:1px solid #8a8a8a"></div>
<div class="a" style="left:18px;top:490.3px;width:5px;height:1px;background:#222"></div>
<div class="a" style="left:20px;top:488.3px;width:1px;height:5px;background:#222"></div>
<svg class="a" style="left:35px;top:484px;overflow:visible" width="14" height="14"><path d="M0 5 L3 7.5 L0 10Z" fill="#222"/><rect x="5" y="0" width="8" height="15" fill="#2b303c"/></svg>
<div class="tr" style="left:54px;top:483.8px">Generate</div>
<div class="a" style="left:24px;top:505.4px;width:10px;height:1px;border-top:1px dotted #9a9a9a"></div>
<div class="a" style="left:20px;top:505.4px;width:14px;height:1px;border-top:1px dotted #9a9a9a"></div>
<svg class="a" style="left:35px;top:498px;overflow:visible" width="14" height="14"><path d="M7 0 L8.8 4.2 L13.3 4.5 L9.9 7.4 L11 11.8 L7 9.5 L3 11.8 L4.1 7.4 L0.7 4.5 L5.2 4.2Z" fill="#f6b914"/><text x="4" y="14" font-size="6" font-weight="bold" font-family="Liberation Sans" fill="#111">DX</text></svg>
<div class="tr" style="left:54px;top:498.4px">DX Filters</div>
<div class="a" style="left:24px;top:520.1px;width:10px;height:1px;border-top:1px dotted #9a9a9a"></div>
<div class="a" style="left:20px;top:520.1px;width:14px;height:1px;border-top:1px dotted #9a9a9a"></div>
<svg class="a" style="left:35px;top:513px;overflow:visible" width="14" height="14"><path d="M7 0 L8.8 4.2 L13.3 4.5 L9.9 7.4 L11 11.8 L7 9.5 L3 11.8 L4.1 7.4 L0.7 4.5 L5.2 4.2Z" fill="#f6b914"/><text x="1" y="14" font-size="5.5" font-weight="bold" font-family="Liberation Sans" fill="#111">VST</text></svg>
<div class="tr" style="left:54px;top:513.1px">VST Filters</div>
</div>

<!-- WAVE -->
<div id="wave" class="a">
<div class="a" style="left:202px;top:1px;width:400px;height:7px;background:#0f8ccb"></div>
<div class="a" style="left:311px;top:1px;width:120px;height:7px;background:#56b0e4"></div>
<div class="a" style="left:0;top:9px;width:709px;height:9px;background:#5a5a5a;border-top:2px solid #a9a7a4;border-bottom:2px solid #a9a7a4"></div>
<div class="a" style="left:0;top:487px;width:709px;height:9px;background:#555555;border-top:2px solid #a9a7a4"></div>
<div class="a" style="left:194.1px;top:18px;width:213.1px;height:469px;background:#4e5862"></div>
<div class="a" style="left:0;top:251px;width:709px;height:3px;background:transparent;border-top:1px solid #e0e0e0;border-bottom:1px solid #e0e0e0"></div>
<svg class="a" style="left:0;top:0" width="709" height="487" viewBox="233 146 709 487"><path d="M250.4 164 V396 M250.4 401 V633 M279.3 164 V396 M279.3 401 V633 M308.3 164 V396 M308.3 401 V633 M337.3 164 V396 M337.3 401 V633 M366.2 164 V396 M366.2 401 V633 M395.2 164 V396 M395.2 401 V633 M424.2 164 V396 M424.2 401 V633 M453.1 164 V396 M453.1 401 V633 M482.1 164 V396 M482.1 401 V633 M511.1 164 V396 M511.1 401 V633 M540.0 164 V396 M540.0 401 V633 M569.0 164 V396 M569.0 401 V633 M598.0 164 V396 M598.0 401 V633 M626.9 164 V396 M626.9 401 V633 M655.9 164 V396 M655.9 401 V633 M684.9 164 V396 M684.9 401 V633 M713.8 164 V396 M713.8 401 V633 M742.8 164 V396 M742.8 401 V633 M771.8 164 V396 M771.8 401 V633 M800.7 164 V396 M800.7 401 V633 M829.7 164 V396 M829.7 401 V633 M858.6 164 V396 M858.6 401 V633 M887.6 164 V396 M887.6 401 V633 M916.6 164 V396 M916.6 401 V633" stroke="#26343c" stroke-width="1" stroke-dasharray="3 3"/><path d="M233 194.5 H942 M233 366.5 H942 M233 212.8 H942 M233 348.2 H942 M233 227.0 H942 M233 334.0 H942 M233 247.0 H942 M233 314.0 H942 M233 264.0 H942 M233 297.0 H942 M233 431.0 H942 M233 603.0 H942 M233 449.3 H942 M233 584.7 H942 M233 463.5 H942 M233 570.5 H942 M233 483.5 H942 M233 550.5 H942 M233 500.5 H942 M233 533.5 H942" stroke="#26343c" stroke-width="1" stroke-dasharray="3 3"/><path d="M233 172.8 H942 M233 388.2 H942 M233 409.3 H942 M233 624.7 H942" stroke="#4f6878" stroke-width="1"/><defs><clipPath id="selclip"><rect x="427.1" y="164" width="213.1" height="470"/></clipPath></defs><g clip-path="url(#selclip)"><path d="M250.4 164 V396 M250.4 401 V633 M279.3 164 V396 M279.3 401 V633 M308.3 164 V396 M308.3 401 V633 M337.3 164 V396 M337.3 401 V633 M366.2 164 V396 M366.2 401 V633 M395.2 164 V396 M395.2 401 V633 M424.2 164 V396 M424.2 401 V633 M453.1 164 V396 M453.1 401 V633 M482.1 164 V396 M482.1 401 V633 M511.1 164 V396 M511.1 401 V633 M540.0 164 V396 M540.0 401 V633 M569.0 164 V396 M569.0 401 V633 M598.0 164 V396 M598.0 401 V633 M626.9 164 V396 M626.9 401 V633 M655.9 164 V396 M655.9 401 V633 M684.9 164 V396 M684.9 401 V633 M713.8 164 V396 M713.8 401 V633 M742.8 164 V396 M742.8 401 V633 M771.8 164 V396 M771.8 401 V633 M800.7 164 V396 M800.7 401 V633 M829.7 164 V396 M829.7 401 V633 M858.6 164 V396 M858.6 401 V633 M887.6 164 V396 M887.6 401 V633 M916.6 164 V396 M916.6 401 V633 M233 194.5 H942 M233 366.5 H942 M233 212.8 H942 M233 348.2 H942 M233 227.0 H942 M233 334.0 H942 M233 247.0 H942 M233 314.0 H942 M233 264.0 H942 M233 297.0 H942 M233 431.0 H942 M233 603.0 H942 M233 449.3 H942 M233 584.7 H942 M233 463.5 H942 M233 570.5 H942 M233 483.5 H942 M233 550.5 H942 M233 500.5 H942 M233 533.5 H942" stroke="#6e7e89" stroke-width="1" stroke-dasharray="3 3"/><path d="M233 172.8 H942 M233 388.2 H942 M233 409.3 H942 M233 624.7 H942" stroke="#95aab8" stroke-width="1"/></g><path d="M233.5 257.7V307.5M234.5 256.2V308.9M235.5 256.9V308.2M236.5 260.1V307.6M237.5 259.0V309.6M238.5 238.0V314.3M239.5 242.5V318.3M240.5 245.2V319.2M241.5 248.8V314.2M242.5 231.5V325.7M243.5 244.1V320.8M244.5 246.4V322.9M245.5 221.7V324.7M246.5 241.3V322.5M247.5 247.4V308.2M248.5 226.7V328.5M249.5 227.6V334.9M250.5 222.1V336.0M251.5 228.1V332.7M252.5 233.4V330.6M253.5 247.7V318.7M254.5 247.0V318.6M255.5 226.9V321.5M256.5 242.3V325.0M257.5 247.1V320.0M258.5 244.7V321.6M259.5 244.3V334.4M260.5 235.0V334.4M261.5 227.1V324.9M262.5 232.7V325.4M263.5 245.2V323.5M264.5 239.7V332.2M265.5 257.1V324.0M266.5 250.3V323.6M267.5 257.7V320.0M268.5 252.0V312.6M269.5 247.6V313.1M270.5 250.3V315.0M271.5 255.0V319.6M272.5 255.2V319.3M273.5 235.9V316.6M274.5 249.3V309.5M275.5 246.4V313.6M276.5 244.6V313.2M277.5 240.0V306.9M278.5 238.0V304.7M279.5 244.5V306.5M280.5 247.5V303.8M281.5 240.3V301.5M282.5 241.2V307.4M283.5 257.8V310.1M284.5 244.2V310.5M285.5 251.3V320.7M286.5 249.2V317.7M287.5 238.1V328.4M288.5 233.8V320.4M289.5 251.7V330.4M290.5 251.4V331.6M291.5 236.1V313.7M292.5 249.6V312.8M293.5 238.5V326.6M294.5 234.5V316.5M295.5 255.7V330.2M296.5 255.3V312.2M297.5 253.8V337.0M298.5 250.8V317.2M299.5 247.9V319.2M300.5 230.2V319.9M301.5 241.0V330.4M302.5 240.7V329.8M303.5 251.3V322.2M304.5 226.9V322.5M305.5 244.4V322.8M306.5 239.8V327.4M307.5 232.0V339.9M308.5 208.2V335.2M309.5 194.9V316.4M310.5 217.7V321.2M311.5 230.9V344.7M312.5 240.4V344.1M313.5 231.2V334.7M314.5 229.9V334.0M315.5 235.0V341.8M316.5 241.0V331.5M317.5 236.0V326.2M318.5 220.3V323.8M319.5 215.2V333.7M320.5 198.8V347.3M321.5 223.1V333.1M322.5 231.4V331.3M323.5 232.2V318.4M324.5 221.3V320.5M325.5 229.7V319.9M326.5 240.3V314.5M327.5 242.8V314.5M328.5 238.2V326.7M329.5 229.8V315.6M330.5 232.0V316.2M331.5 244.2V308.7M332.5 238.6V307.3M333.5 234.9V321.8M334.5 233.7V324.8M335.5 234.8V320.2M336.5 233.3V321.1M337.5 242.6V325.3M338.5 229.4V328.0M339.5 228.4V330.1M340.5 241.1V331.9M341.5 251.8V314.6M342.5 250.6V313.4M343.5 236.5V325.8M344.5 236.1V331.0M345.5 246.6V314.7M346.5 247.6V311.6M347.5 251.6V324.4M348.5 244.5V316.9M349.5 247.4V313.8M350.5 247.2V327.0M351.5 246.7V313.1M352.5 241.2V320.2M353.5 246.3V326.0M354.5 245.5V311.3M355.5 258.2V318.1M356.5 255.8V320.0M357.5 239.7V313.0M358.5 237.6V313.6M359.5 241.7V319.3M360.5 253.4V318.2M361.5 235.8V320.1M362.5 249.6V324.4M363.5 245.8V336.0M364.5 250.7V337.0M365.5 236.9V312.5M366.5 246.7V332.9M367.5 239.0V327.0M368.5 233.9V332.7M369.5 233.3V340.8M370.5 230.4V340.4M371.5 231.3V321.2M372.5 232.2V314.6M373.5 237.6V327.0M374.5 240.1V343.3M375.5 236.8V322.4M376.5 235.2V326.9M377.5 248.7V333.7M378.5 235.3V336.3M379.5 240.8V320.8M380.5 232.0V328.0M381.5 222.0V354.0M382.5 202.4V351.6M383.5 225.7V335.7M384.5 234.4V332.4M385.5 234.2V337.4M386.5 232.1V346.6M387.5 226.0V334.9M388.5 217.0V344.9M389.5 226.9V335.2M390.5 228.7V328.8M391.5 242.0V325.9M392.5 226.5V319.2M393.5 226.6V339.5M394.5 244.3V321.7M395.5 250.9V325.5M396.5 239.7V314.9M397.5 233.6V332.2M398.5 248.8V334.9M399.5 239.5V325.9M400.5 229.2V329.6M401.5 244.9V336.7M402.5 245.7V337.0M403.5 233.3V335.0M404.5 233.4V317.4M405.5 223.0V321.6M406.5 228.7V322.7M407.5 246.6V339.7M408.5 224.3V340.5M409.5 242.9V314.8M410.5 244.1V323.8M411.5 246.3V313.3M412.5 239.6V318.6M413.5 223.0V309.4M414.5 221.9V325.2M415.5 210.8V330.5M416.5 209.2V332.0M417.5 241.2V333.2M418.5 246.7V318.0M419.5 244.1V310.1M420.5 242.7V313.2M421.5 247.6V325.2M422.5 241.0V327.2M423.5 232.5V313.2M424.5 232.2V316.4M425.5 225.8V328.0M426.5 226.0V328.1M640.5 243.8V318.0M641.5 207.5V321.3M642.5 207.6V321.8M643.5 225.0V328.3M644.5 228.5V328.0M645.5 237.7V325.9M646.5 239.7V323.2M647.5 239.0V322.4M648.5 218.4V323.1M649.5 245.8V313.2M650.5 237.8V313.8M651.5 243.2V320.3M652.5 239.0V330.9M653.5 227.4V350.2M654.5 214.5V363.7M655.5 189.3V343.8M656.5 215.7V330.8M657.5 210.6V320.3M658.5 207.3V329.6M659.5 222.6V318.5M660.5 223.4V315.2M661.5 227.4V311.3M662.5 241.0V312.9M663.5 238.5V312.4M664.5 237.7V312.7M665.5 231.5V317.7M666.5 235.6V325.9M667.5 243.2V316.0M668.5 247.4V313.6M669.5 232.3V323.1M670.5 230.3V324.8M671.5 229.3V320.1M672.5 232.1V319.2M673.5 214.8V315.2M674.5 215.4V312.0M675.5 234.6V319.2M676.5 220.8V322.7M677.5 233.7V315.7M678.5 221.3V309.8M679.5 222.7V320.8M680.5 218.4V319.5M681.5 227.8V309.4M682.5 235.5V309.9M683.5 217.6V322.4M684.5 219.4V317.7M685.5 225.4V312.5M686.5 229.0V307.9M687.5 207.7V314.8M688.5 238.9V315.3M689.5 245.0V321.6M690.5 224.4V325.5M691.5 226.3V318.5M692.5 229.4V318.7M693.5 248.1V315.4M694.5 254.5V316.2M695.5 236.1V322.1M696.5 228.3V320.9M697.5 240.5V336.6M698.5 240.4V335.4M699.5 242.6V340.7M700.5 247.3V339.5M701.5 218.1V332.6M702.5 220.2V339.0M703.5 247.9V317.6M704.5 239.5V318.4M705.5 246.5V337.7M706.5 242.2V323.4M707.5 240.3V328.9M708.5 239.9V325.9M709.5 240.0V341.9M710.5 239.1V323.0M711.5 244.7V331.3M712.5 249.4V327.8M713.5 238.4V338.4M714.5 240.8V336.1M715.5 238.8V329.8M716.5 239.2V327.5M717.5 234.0V329.2M718.5 251.7V331.5M719.5 242.0V338.1M720.5 239.9V338.0M721.5 230.2V316.8M722.5 230.6V331.4M723.5 238.3V326.0M724.5 236.9V329.6M725.5 235.1V330.4M726.5 232.7V326.7M727.5 223.1V327.5M728.5 238.8V329.2M729.5 223.1V323.6M730.5 204.2V323.4M731.5 226.3V335.3M732.5 231.9V336.5M733.5 214.3V325.4M734.5 230.0V326.4M735.5 224.0V332.0M736.5 239.4V318.9M737.5 232.8V323.6M738.5 216.9V322.3M739.5 234.8V314.5M740.5 247.8V313.1M741.5 224.6V312.5M742.5 248.5V334.1M743.5 241.2V319.7M744.5 241.2V327.5M745.5 217.1V324.8M746.5 214.2V326.2M747.5 232.9V315.1M748.5 243.5V312.7M749.5 235.7V324.8M750.5 238.2V323.9M751.5 240.3V308.6M752.5 219.0V318.7M753.5 240.6V322.3M754.5 243.2V315.9M755.5 236.6V326.0M756.5 229.3V328.6M757.5 234.3V332.6M758.5 234.9V330.3M759.5 240.2V320.9M760.5 236.8V320.8M761.5 216.9V315.5M762.5 216.2V327.8M763.5 222.3V324.0M764.5 237.7V324.2M765.5 219.8V325.5M766.5 235.8V327.7M767.5 241.0V332.8M768.5 243.0V333.9M769.5 245.4V325.4M770.5 246.2V322.0M771.5 221.2V316.8M772.5 224.6V326.9M773.5 232.2V321.5M774.5 246.5V319.5M775.5 248.8V309.5M776.5 243.6V314.1M777.5 235.5V314.5M778.5 233.0V311.6M779.5 245.7V311.1M780.5 239.6V324.3M781.5 243.7V328.7M782.5 245.1V313.5M783.5 236.4V323.1M784.5 241.0V308.2M785.5 231.8V312.9M786.5 232.8V318.4M787.5 238.1V313.3M788.5 240.4V315.8M789.5 230.0V309.6M790.5 237.7V312.5M791.5 229.2V308.0M792.5 247.4V308.7M793.5 244.3V323.9M794.5 245.9V325.8M795.5 232.2V313.5M796.5 240.8V313.1M797.5 230.0V325.1M798.5 237.6V320.2M799.5 221.6V311.5M800.5 215.3V312.2M801.5 226.8V328.7M802.5 220.7V324.8M803.5 239.3V313.6M804.5 220.1V329.2M805.5 225.0V329.0M806.5 228.5V329.7M807.5 231.6V312.6M808.5 237.4V332.7M809.5 234.1V320.3M810.5 232.7V324.1M811.5 223.0V329.9M812.5 254.1V313.5M813.5 246.4V323.7M814.5 245.4V331.1M815.5 238.2V319.8M816.5 229.0V320.9M817.5 233.1V320.4M818.5 247.5V323.1M819.5 249.7V328.8M820.5 249.7V325.3M821.5 255.6V314.1M822.5 252.7V311.2M823.5 233.5V303.9M824.5 236.0V309.3M825.5 258.0V314.3M826.5 258.7V299.6M827.5 242.5V308.2M828.5 248.7V303.7M829.5 243.2V299.0M830.5 244.8V305.1M831.5 261.0V306.5M832.5 261.9V306.2M833.5 246.0V305.2M834.5 245.7V309.0M835.5 255.0V310.7M836.5 257.7V307.0M837.5 259.2V314.7M838.5 258.9V319.7M839.5 243.4V303.9M840.5 244.3V306.6M841.5 242.1V306.8M842.5 245.3V306.5M843.5 250.0V306.6M844.5 254.2V306.8M845.5 257.9V319.8M846.5 255.5V324.0M847.5 249.2V331.8M848.5 243.6V314.7M849.5 251.5V322.5M850.5 250.8V327.3M851.5 238.2V315.8M852.5 238.2V319.8M853.5 242.9V310.1M854.5 245.4V321.7M855.5 258.4V321.8M856.5 256.4V315.2M857.5 247.5V308.6M858.5 236.8V311.3M859.5 229.3V318.8M860.5 228.3V318.8M861.5 244.9V335.8M862.5 225.0V334.3M863.5 234.2V332.8M864.5 230.3V330.1M865.5 243.5V323.1M866.5 247.7V337.2M867.5 230.2V336.4M868.5 247.7V322.9M869.5 239.9V317.2M870.5 225.3V318.8M871.5 242.4V331.7M872.5 242.9V334.3M873.5 243.5V316.7M874.5 248.0V339.0M875.5 242.6V330.6M876.5 220.2V328.6M877.5 220.9V335.3M878.5 221.3V330.7M879.5 247.8V337.1M880.5 232.2V322.7M881.5 249.8V340.8M882.5 232.0V343.9M883.5 248.2V329.0M884.5 234.9V329.6M885.5 227.3V328.9M886.5 212.7V339.7M887.5 224.6V341.4M888.5 242.2V337.6M889.5 239.1V326.1M890.5 233.1V342.8M891.5 246.7V319.7M892.5 239.6V333.9M893.5 222.0V323.2M894.5 234.1V337.3M895.5 242.8V337.6M896.5 245.0V332.0M897.5 236.3V340.9M898.5 236.4V340.2M899.5 237.4V322.4M900.5 245.0V320.3M901.5 240.1V327.3M902.5 235.5V329.5M903.5 244.6V315.4M904.5 241.0V315.6M905.5 242.1V328.0M906.5 241.5V326.7M907.5 220.7V311.7M908.5 223.8V313.2M909.5 248.4V317.7M910.5 229.0V329.6M911.5 236.9V324.3M912.5 236.1V329.7M913.5 219.9V334.4M914.5 214.0V322.7M915.5 222.2V326.5M916.5 221.9V317.7M917.5 244.6V307.1M918.5 235.7V308.6M919.5 246.8V316.4M920.5 235.3V312.2M921.5 237.7V312.9M922.5 226.2V315.9M923.5 247.6V312.7M924.5 244.4V326.2M925.5 250.2V325.9M926.5 256.9V328.9M927.5 245.5V315.6M928.5 247.2V330.3M929.5 245.6V329.1M930.5 241.7V328.0M931.5 238.8V308.2M932.5 238.9V309.1M933.5 245.1V315.8M934.5 222.7V320.7M935.5 247.3V325.7M936.5 248.7V326.1M937.5 229.6V338.0M938.5 222.8V341.8M939.5 233.2V347.7M940.5 239.0V354.5M941.5 221.7V335.7" stroke="#0f8ccb" stroke-width="1"/><path d="M427.5 233.1V315.3M428.5 240.5V313.5M429.5 231.8V331.3M430.5 232.1V328.7M431.5 220.2V318.9M432.5 220.9V315.8M433.5 243.5V331.8M434.5 238.3V315.5M435.5 222.5V322.4M436.5 223.2V324.1M437.5 249.4V324.4M438.5 249.1V324.0M439.5 234.5V342.1M440.5 236.3V341.4M441.5 240.5V334.6M442.5 237.9V335.6M443.5 247.4V325.0M444.5 243.7V326.9M445.5 236.5V320.8M446.5 239.4V333.0M447.5 241.3V318.9M448.5 239.0V331.1M449.5 233.1V343.2M450.5 230.4V342.8M451.5 230.3V334.0M452.5 242.5V328.1M453.5 240.6V329.8M454.5 234.5V340.4M455.5 238.6V333.2M456.5 239.8V329.4M457.5 230.4V331.7M458.5 226.3V328.5M459.5 230.3V329.2M460.5 223.5V329.4M461.5 210.6V327.6M462.5 193.3V328.5M463.5 219.8V335.7M464.5 229.3V319.0M465.5 240.9V318.7M466.5 236.8V325.6M467.5 239.4V325.2M468.5 236.5V322.8M469.5 248.6V329.9M470.5 250.2V331.8M471.5 231.8V321.0M472.5 226.0V316.2M473.5 244.6V328.5M474.5 244.8V324.4M475.5 229.8V316.9M476.5 229.9V313.9M477.5 225.9V327.6M478.5 245.6V328.4M479.5 236.6V329.2M480.5 234.0V329.2M481.5 226.8V327.1M482.5 217.7V305.0M483.5 202.8V324.9M484.5 222.5V326.0M485.5 222.2V325.0M486.5 238.3V321.8M487.5 234.0V313.5M488.5 236.2V317.2M489.5 214.8V327.3M490.5 214.2V328.9M491.5 209.4V322.3M492.5 213.7V323.5M493.5 221.4V316.8M494.5 218.7V322.5M495.5 233.8V324.5M496.5 235.4V323.3M497.5 225.2V333.3M498.5 245.0V329.8M499.5 228.8V326.0M500.5 227.9V324.6M501.5 244.6V323.6M502.5 240.2V326.3M503.5 210.4V312.2M504.5 239.3V316.4M505.5 237.6V314.7M506.5 220.5V311.9M507.5 228.7V328.4M508.5 237.2V327.8M509.5 209.9V316.9M510.5 235.2V327.3M511.5 245.3V312.3M512.5 247.8V315.7M513.5 241.3V315.4M514.5 245.0V313.3M515.5 217.0V320.0M516.5 235.9V322.5M517.5 219.6V314.8M518.5 218.0V321.6M519.5 226.5V319.6M520.5 237.4V328.1M521.5 237.7V321.3M522.5 213.7V327.9M523.5 236.6V331.7M524.5 233.3V326.3M525.5 238.1V313.5M526.5 239.3V334.5M527.5 246.9V339.5M528.5 232.3V328.9M529.5 237.1V326.8M530.5 234.2V321.7M531.5 236.6V319.8M532.5 214.4V315.5M533.5 226.4V337.1M534.5 231.9V338.5M535.5 228.4V341.1M536.5 230.9V341.7M537.5 233.2V321.8M538.5 236.0V324.8M539.5 237.0V339.1M540.5 240.1V346.7M541.5 246.9V344.2M542.5 241.8V342.1M543.5 247.2V333.1M544.5 244.7V331.1M545.5 243.6V342.8M546.5 243.4V325.9M547.5 247.4V320.3M548.5 249.0V320.4M549.5 243.1V312.0M550.5 252.3V324.4M551.5 239.8V314.4M552.5 240.2V315.4M553.5 254.4V317.1M554.5 255.1V332.8M555.5 255.5V338.8M556.5 242.3V325.3M557.5 245.2V337.9M558.5 244.4V339.2M559.5 256.6V317.7M560.5 250.9V316.7M561.5 240.2V328.9M562.5 253.2V334.7M563.5 233.9V335.5M564.5 230.1V337.5M565.5 245.6V343.0M566.5 245.1V342.5M567.5 237.8V328.1M568.5 237.4V336.7M569.5 214.9V332.7M570.5 231.4V317.6M571.5 237.2V330.6M572.5 242.7V339.5M573.5 229.3V322.9M574.5 225.6V324.5M575.5 225.5V335.9M576.5 226.1V331.6M577.5 242.6V316.9M578.5 244.9V330.3M579.5 237.7V326.8M580.5 231.6V321.3M581.5 241.2V327.0M582.5 221.3V340.7M583.5 218.6V357.2M584.5 199.5V368.5M585.5 220.7V343.4M586.5 233.1V330.9M587.5 224.1V323.8M588.5 246.3V316.5M589.5 250.8V313.9M590.5 255.8V311.5M591.5 235.8V320.4M592.5 232.7V315.6M593.5 239.0V310.0M594.5 240.7V324.0M595.5 243.3V319.3M596.5 234.4V320.3M597.5 255.2V318.2M598.5 240.2V314.2M599.5 245.1V321.2M600.5 248.8V310.7M601.5 239.8V316.0M602.5 253.2V320.1M603.5 254.7V312.2M604.5 254.4V315.3M605.5 261.4V314.9M606.5 256.9V317.7M607.5 241.7V318.2M608.5 245.5V316.0M609.5 257.0V311.4M610.5 253.3V312.0M611.5 242.3V319.9M612.5 242.4V310.1M613.5 230.1V327.9M614.5 234.4V324.7M615.5 251.0V311.9M616.5 251.1V311.4M617.5 228.7V315.5M618.5 242.9V314.1M619.5 240.9V320.4M620.5 244.9V319.9M621.5 242.2V317.0M622.5 235.3V319.9M623.5 229.9V312.0M624.5 229.2V306.3M625.5 238.0V317.5M626.5 230.5V317.8M627.5 235.7V320.7M628.5 214.6V324.8M629.5 242.2V314.2M630.5 214.8V318.0M631.5 227.4V328.3M632.5 229.8V319.1M633.5 239.3V328.3M634.5 236.9V325.6M635.5 211.7V326.3M636.5 232.1V326.3M637.5 224.6V327.8M638.5 227.2V328.5M639.5 240.2V331.7" stroke="#56aee0" stroke-width="1"/><path d="M233.5 462.2V597.2M234.5 463.9V573.4M235.5 448.2V568.2M236.5 475.6V579.4M237.5 465.6V593.5M238.5 479.8V577.6M239.5 471.9V560.6M240.5 473.7V575.9M241.5 486.7V565.2M242.5 485.5V558.3M243.5 488.9V562.0M244.5 484.1V558.4M245.5 476.0V563.1M246.5 459.5V563.6M247.5 443.9V565.1M248.5 425.2V572.7M249.5 447.3V558.8M250.5 466.2V558.4M251.5 468.2V566.4M252.5 468.1V564.5M253.5 461.2V563.9M254.5 463.5V567.5M255.5 469.1V553.8M256.5 464.9V553.4M257.5 455.3V553.1M258.5 458.5V564.4M259.5 434.8V551.9M260.5 436.9V559.8M261.5 449.7V569.2M262.5 451.7V569.5M263.5 456.1V566.9M264.5 454.8V568.6M265.5 436.4V561.7M266.5 472.0V559.6M267.5 477.4V547.6M268.5 479.6V543.7M269.5 443.1V551.8M270.5 473.7V555.3M271.5 479.4V553.6M272.5 479.5V560.9M273.5 475.2V552.1M274.5 457.9V566.9M275.5 475.9V572.2M276.5 474.3V559.0M277.5 485.3V555.6M278.5 470.9V555.5M279.5 470.6V563.0M280.5 484.7V559.8M281.5 470.8V567.7M282.5 472.0V546.9M283.5 469.9V556.1M284.5 474.9V570.7M285.5 458.5V544.6M286.5 461.2V559.6M287.5 461.1V549.5M288.5 466.8V554.4M289.5 472.0V554.7M290.5 466.2V554.4M291.5 478.6V554.8M292.5 476.7V557.5M293.5 464.3V563.4M294.5 463.2V561.5M295.5 442.7V566.6M296.5 482.2V549.8M297.5 467.7V559.4M298.5 466.9V555.1M299.5 452.7V557.1M300.5 476.7V554.9M301.5 469.1V558.5M302.5 470.8V558.8M303.5 474.2V544.4M304.5 453.1V542.6M305.5 485.0V556.5M306.5 473.3V553.2M307.5 482.3V554.9M308.5 479.5V552.9M309.5 469.2V551.7M310.5 463.7V551.7M311.5 478.7V542.9M312.5 481.4V564.3M313.5 456.7V561.5M314.5 470.9V562.8M315.5 449.6V553.4M316.5 447.3V546.2M317.5 469.1V548.6M318.5 450.9V562.7M319.5 436.6V569.2M320.5 424.3V583.4M321.5 438.0V564.3M322.5 461.0V554.7M323.5 448.5V550.0M324.5 453.7V549.3M325.5 449.2V543.1M326.5 460.0V548.4M327.5 468.1V573.5M328.5 475.4V574.9M329.5 462.0V547.3M330.5 475.3V547.0M331.5 479.5V561.9M332.5 476.2V564.6M333.5 469.7V559.3M334.5 469.3V558.8M335.5 475.7V567.6M336.5 457.5V548.3M337.5 473.4V564.7M338.5 468.9V556.6M339.5 460.5V544.0M340.5 458.3V559.7M341.5 469.3V555.4M342.5 471.1V556.4M343.5 467.5V561.3M344.5 474.5V561.7M345.5 466.1V563.4M346.5 462.4V558.8M347.5 463.1V558.3M348.5 461.0V556.1M349.5 463.4V559.8M350.5 461.8V544.5M351.5 468.4V561.1M352.5 467.8V554.1M353.5 472.1V544.4M354.5 479.6V543.0M355.5 451.2V564.1M356.5 451.6V557.1M357.5 456.4V554.4M358.5 479.5V555.2M359.5 475.9V565.8M360.5 474.2V570.0M361.5 484.5V571.4M362.5 486.8V556.9M363.5 477.5V559.1M364.5 484.7V572.3M365.5 492.6V566.3M366.5 488.2V563.5M367.5 468.6V564.4M368.5 481.2V577.3M369.5 471.0V562.7M370.5 477.8V563.1M371.5 472.3V575.5M372.5 479.7V569.1M373.5 478.4V585.7M374.5 474.2V570.8M375.5 476.8V566.8M376.5 477.2V587.7M377.5 477.2V579.3M378.5 466.3V560.1M379.5 467.6V574.3M380.5 459.3V581.1M381.5 438.2V563.5M382.5 417.8V564.0M383.5 452.5V573.2M384.5 463.4V567.5M385.5 474.6V574.1M386.5 490.4V557.1M387.5 485.8V562.2M388.5 487.6V551.9M389.5 490.6V553.2M390.5 493.0V555.7M391.5 482.5V547.5M392.5 478.3V548.7M393.5 473.6V552.6M394.5 486.0V567.8M395.5 483.3V561.6M396.5 477.4V562.2M397.5 493.2V553.6M398.5 468.6V556.7M399.5 463.1V555.2M400.5 468.3V555.0M401.5 491.1V566.3M402.5 486.3V563.9M403.5 478.2V564.7M404.5 479.2V570.6M405.5 477.9V558.7M406.5 469.1V576.1M407.5 461.0V572.3M408.5 483.2V573.1M409.5 452.8V556.3M410.5 472.3V575.2M411.5 453.0V572.1M412.5 462.1V575.7M413.5 473.8V561.9M414.5 476.3V558.0M415.5 448.4V573.3M416.5 466.7V572.1M417.5 458.9V570.8M418.5 458.1V551.1M419.5 459.6V570.6M420.5 484.4V569.0M421.5 453.3V562.4M422.5 458.8V571.0M423.5 461.8V566.6M424.5 459.3V564.1M425.5 469.6V567.4M426.5 454.3V554.5M640.5 486.0V579.4M641.5 469.8V579.5M642.5 483.4V576.3M643.5 492.3V566.0M644.5 469.6V579.5M645.5 475.1V572.4M646.5 474.0V570.3M647.5 461.7V575.5M648.5 460.4V581.2M649.5 476.5V573.9M650.5 478.4V576.8M651.5 474.0V553.1M652.5 468.0V570.6M653.5 451.5V575.0M654.5 442.6V582.4M655.5 412.3V566.2M656.5 441.0V556.5M657.5 459.8V554.3M658.5 468.2V553.5M659.5 470.3V560.4M660.5 471.1V558.9M661.5 461.4V556.1M662.5 468.8V550.0M663.5 475.0V551.1M664.5 473.7V565.1M665.5 463.7V556.7M666.5 470.8V557.3M667.5 468.0V569.6M668.5 468.2V568.4M669.5 482.0V565.1M670.5 459.9V566.3M671.5 462.3V574.2M672.5 487.0V574.4M673.5 471.6V559.4M674.5 464.9V559.7M675.5 474.5V568.0M676.5 476.2V566.2M677.5 458.9V559.3M678.5 473.2V559.1M679.5 474.8V569.5M680.5 479.6V549.7M681.5 462.6V567.6M682.5 460.8V567.3M683.5 475.9V552.7M684.5 478.1V554.5M685.5 469.4V545.6M686.5 470.6V543.6M687.5 454.4V560.7M688.5 472.4V558.6M689.5 454.9V556.1M690.5 459.9V547.9M691.5 474.6V564.5M692.5 474.9V562.5M693.5 478.7V553.1M694.5 474.1V551.0M695.5 476.1V556.7M696.5 479.0V556.8M697.5 472.3V563.0M698.5 476.2V551.6M699.5 465.5V555.8M700.5 472.9V573.4M701.5 478.4V553.9M702.5 473.6V556.5M703.5 457.7V565.4M704.5 455.5V575.4M705.5 463.9V567.9M706.5 455.7V569.7M707.5 482.0V580.3M708.5 484.6V556.1M709.5 473.2V549.2M710.5 473.9V579.6M711.5 483.6V572.1M712.5 485.5V567.6M713.5 474.2V553.2M714.5 469.9V558.3M715.5 493.0V566.7M716.5 496.1V566.4M717.5 482.8V555.1M718.5 479.1V553.3M719.5 474.0V561.4M720.5 467.8V559.4M721.5 465.1V541.2M722.5 475.0V540.6M723.5 467.1V552.4M724.5 464.1V553.6M725.5 450.8V552.8M726.5 439.1V548.6M727.5 456.5V544.4M728.5 468.1V546.1M729.5 473.9V538.0M730.5 481.2V540.1M731.5 474.5V547.8M732.5 466.6V550.2M733.5 477.7V539.9M734.5 477.8V538.2M735.5 480.4V547.0M736.5 461.1V550.1M737.5 465.6V555.6M738.5 472.0V554.6M739.5 454.8V550.7M740.5 482.1V550.3M741.5 485.9V545.1M742.5 465.5V539.9M743.5 485.3V557.4M744.5 455.8V557.7M745.5 471.8V548.2M746.5 459.6V545.8M747.5 478.2V558.4M748.5 475.6V561.8M749.5 474.3V562.1M750.5 471.5V560.5M751.5 482.8V551.2M752.5 481.6V572.5M753.5 488.2V551.5M754.5 485.9V552.8M755.5 480.2V576.8M756.5 486.9V573.0M757.5 480.6V550.2M758.5 473.6V545.1M759.5 486.8V563.2M760.5 469.5V559.4M761.5 483.5V554.0M762.5 489.9V551.3M763.5 477.9V551.4M764.5 491.9V549.9M765.5 491.9V573.3M766.5 490.5V554.2M767.5 475.5V573.7M768.5 476.6V571.9M769.5 472.6V554.2M770.5 469.1V573.9M771.5 476.5V561.4M772.5 471.5V548.5M773.5 487.0V565.4M774.5 475.4V563.9M775.5 465.2V554.7M776.5 480.8V566.7M777.5 482.2V566.1M778.5 480.0V565.2M779.5 487.7V559.3M780.5 482.5V562.3M781.5 486.5V566.0M782.5 468.1V561.7M783.5 461.1V553.4M784.5 458.6V554.8M785.5 483.5V567.1M786.5 474.2V566.1M787.5 478.9V552.5M788.5 485.6V549.3M789.5 478.5V552.9M790.5 480.9V564.9M791.5 478.0V543.3M792.5 480.5V545.9M793.5 476.5V550.8M794.5 477.7V555.9M795.5 477.7V564.4M796.5 479.2V550.4M797.5 473.5V560.5M798.5 475.3V553.3M799.5 474.2V548.7M800.5 464.7V562.3M801.5 473.5V544.8M802.5 472.0V555.1M803.5 478.1V540.2M804.5 477.9V539.6M805.5 483.7V541.0M806.5 485.3V540.2M807.5 482.7V553.4M808.5 481.5V536.0M809.5 456.5V537.9M810.5 457.5V541.0M811.5 460.5V552.7M812.5 463.4V556.7M813.5 475.1V546.8M814.5 467.0V545.5M815.5 457.1V561.6M816.5 466.5V553.9M817.5 463.7V548.3M818.5 465.4V552.0M819.5 471.0V562.0M820.5 452.5V559.5M821.5 476.2V555.8M822.5 484.0V542.3M823.5 469.3V543.3M824.5 469.2V542.6M825.5 480.9V563.2M826.5 483.3V562.5M827.5 453.4V560.9M828.5 450.6V557.6M829.5 464.5V548.7M830.5 465.7V552.6M831.5 472.3V543.6M832.5 473.8V549.8M833.5 473.3V569.5M834.5 479.6V555.5M835.5 482.9V549.9M836.5 481.2V547.7M837.5 461.7V561.2M838.5 449.1V563.1M839.5 446.0V561.6M840.5 443.6V559.7M841.5 479.2V563.9M842.5 475.2V563.2M843.5 462.2V564.9M844.5 456.8V554.4M845.5 442.4V566.5M846.5 456.7V561.1M847.5 468.3V560.6M848.5 479.2V557.6M849.5 457.2V553.0M850.5 463.9V552.3M851.5 458.0V550.1M852.5 451.7V548.0M853.5 450.0V548.8M854.5 471.6V549.6M855.5 451.3V555.8M856.5 480.0V559.4M857.5 479.2V550.5M858.5 480.8V557.4M859.5 460.1V553.5M860.5 464.6V554.9M861.5 469.0V567.7M862.5 460.6V567.2M863.5 490.2V565.4M864.5 471.9V558.7M865.5 466.4V545.3M866.5 475.8V545.5M867.5 477.0V559.0M868.5 480.9V558.5M869.5 476.2V571.0M870.5 484.6V569.7M871.5 466.8V556.4M872.5 470.5V555.1M873.5 463.0V557.5M874.5 468.7V570.3M875.5 480.9V559.8M876.5 485.1V558.9M877.5 483.6V558.9M878.5 484.4V561.3M879.5 453.6V562.2M880.5 479.5V566.5M881.5 477.8V554.6M882.5 446.9V550.8M883.5 449.7V552.3M884.5 446.1V555.1M885.5 432.2V563.0M886.5 416.8V567.4M887.5 438.7V557.9M888.5 439.1V565.0M889.5 456.5V566.1M890.5 478.9V546.8M891.5 467.7V564.8M892.5 469.4V563.1M893.5 472.8V561.4M894.5 458.3V558.7M895.5 456.6V566.0M896.5 459.7V555.6M897.5 482.6V541.7M898.5 483.4V549.4M899.5 450.0V551.2M900.5 466.9V563.9M901.5 479.3V554.4M902.5 457.3V542.9M903.5 468.2V551.5M904.5 488.0V550.2M905.5 460.9V564.0M906.5 465.1V555.0M907.5 467.4V557.7M908.5 464.2V566.4M909.5 445.6V573.8M910.5 433.1V587.2M911.5 457.6V574.3M912.5 468.0V565.7M913.5 474.5V577.0M914.5 467.0V551.1M915.5 463.8V550.4M916.5 465.0V562.7M917.5 468.6V555.8M918.5 475.6V555.8M919.5 475.3V545.5M920.5 478.0V547.2M921.5 457.5V564.6M922.5 452.7V563.9M923.5 466.6V558.9M924.5 447.0V576.4M925.5 428.3V544.6M926.5 457.9V561.5M927.5 455.8V563.6M928.5 462.2V554.4M929.5 474.9V573.1M930.5 464.9V567.6M931.5 460.7V555.2M932.5 463.4V556.0M933.5 484.2V559.9M934.5 488.5V577.9M935.5 484.9V561.1M936.5 492.3V562.1M937.5 490.4V582.9M938.5 489.4V575.8M939.5 482.0V568.8M940.5 488.2V571.6M941.5 493.1V598.3" stroke="#0f8ccb" stroke-width="1"/><path d="M427.5 477.1V545.0M428.5 482.8V542.5M429.5 469.4V551.4M430.5 472.1V554.5M431.5 444.1V560.1M432.5 459.9V547.6M433.5 468.7V549.4M434.5 451.7V547.1M435.5 472.5V550.1M436.5 466.3V558.7M437.5 461.7V545.8M438.5 462.8V545.8M439.5 448.5V555.8M440.5 455.5V554.9M441.5 450.6V558.6M442.5 452.8V546.4M443.5 436.7V561.8M444.5 432.3V560.5M445.5 456.5V559.6M446.5 459.9V552.3M447.5 436.3V550.4M448.5 436.8V552.7M449.5 470.3V551.7M450.5 474.1V556.3M451.5 473.4V567.4M452.5 472.3V567.4M453.5 457.0V565.4M454.5 447.3V564.5M455.5 425.0V550.6M456.5 446.1V549.2M457.5 457.2V568.3M458.5 455.2V562.0M459.5 448.6V573.4M460.5 454.6V552.3M461.5 439.1V556.4M462.5 416.3V563.1M463.5 446.7V579.1M464.5 461.3V576.5M465.5 469.4V572.2M466.5 468.0V573.2M467.5 471.6V580.6M468.5 477.8V582.7M469.5 479.0V570.2M470.5 484.8V564.4M471.5 451.7V554.4M472.5 455.8V555.5M473.5 455.9V585.8M474.5 458.5V576.6M475.5 453.3V582.7M476.5 438.2V580.1M477.5 465.1V584.6M478.5 463.5V581.5M479.5 456.1V567.2M480.5 459.6V563.0M481.5 467.4V585.9M482.5 475.0V568.7M483.5 461.7V576.5M484.5 472.9V576.5M485.5 470.9V585.1M486.5 450.5V570.4M487.5 475.5V553.9M488.5 469.8V567.6M489.5 470.0V562.4M490.5 474.7V559.2M491.5 435.2V563.8M492.5 469.0V564.5M493.5 429.1V561.3M494.5 434.7V555.7M495.5 441.2V545.8M496.5 441.2V545.8M497.5 424.3V561.6M498.5 448.5V553.0M499.5 458.0V564.5M500.5 467.8V561.7M501.5 477.0V553.7M502.5 479.1V554.0M503.5 446.5V566.7M504.5 479.6V568.7M505.5 469.9V564.5M506.5 470.0V564.0M507.5 473.0V553.3M508.5 470.8V559.9M509.5 468.2V564.9M510.5 448.9V562.4M511.5 483.5V546.5M512.5 473.7V548.5M513.5 469.8V566.0M514.5 481.8V566.4M515.5 478.7V559.4M516.5 477.3V556.9M517.5 477.4V561.9M518.5 477.5V568.7M519.5 478.2V578.0M520.5 479.6V554.0M521.5 476.1V557.8M522.5 472.6V561.9M523.5 483.3V551.4M524.5 480.2V548.6M525.5 475.4V568.4M526.5 466.8V570.7M527.5 457.3V547.2M528.5 451.0V547.6M529.5 446.7V547.6M530.5 453.4V544.4M531.5 436.9V575.2M532.5 432.8V571.5M533.5 452.7V573.6M534.5 434.8V555.2M535.5 441.5V572.8M536.5 444.4V566.7M537.5 466.9V554.3M538.5 450.8V551.3M539.5 443.6V555.0M540.5 448.7V547.6M541.5 428.4V553.1M542.5 457.7V557.8M543.5 436.6V560.6M544.5 441.3V551.9M545.5 473.4V567.3M546.5 468.1V565.6M547.5 432.6V568.4M548.5 437.6V568.0M549.5 478.1V567.2M550.5 476.7V570.1M551.5 468.0V571.3M552.5 478.3V573.7M553.5 454.6V569.9M554.5 450.2V569.9M555.5 448.6V573.3M556.5 465.2V568.8M557.5 469.2V556.6M558.5 466.5V555.0M559.5 448.3V568.4M560.5 448.4V565.4M561.5 473.7V557.4M562.5 459.3V573.7M563.5 484.2V557.0M564.5 465.1V546.6M565.5 444.8V562.3M566.5 440.3V566.8M567.5 447.1V573.2M568.5 448.6V571.2M569.5 472.8V554.0M570.5 478.3V551.8M571.5 455.1V574.8M572.5 481.3V573.8M573.5 470.9V560.7M574.5 452.5V575.7M575.5 448.3V564.4M576.5 467.1V571.2M577.5 482.5V561.1M578.5 479.2V570.3M579.5 469.1V572.9M580.5 465.4V573.9M581.5 487.3V572.3M582.5 485.5V567.2M583.5 472.4V577.9M584.5 462.9V587.1M585.5 444.1V572.0M586.5 423.6V561.3M587.5 455.4V562.6M588.5 465.2V563.0M589.5 472.0V555.7M590.5 476.5V555.3M591.5 473.4V560.4M592.5 469.2V558.8M593.5 448.5V546.6M594.5 448.3V551.7M595.5 469.7V559.9M596.5 482.3V566.2M597.5 465.4V556.9M598.5 457.5V548.7M599.5 462.9V567.2M600.5 434.0V567.5M601.5 456.9V552.6M602.5 462.2V550.0M603.5 442.1V555.8M604.5 465.6V554.3M605.5 440.6V548.7M606.5 441.8V549.4M607.5 478.0V563.7M608.5 448.8V562.4M609.5 472.4V558.9M610.5 480.9V560.4M611.5 478.8V561.7M612.5 473.8V562.7M613.5 462.9V562.3M614.5 488.2V558.0M615.5 480.1V559.7M616.5 480.2V562.3M617.5 482.2V550.0M618.5 487.7V554.7M619.5 464.7V563.6M620.5 459.0V560.6M621.5 467.5V561.1M622.5 464.8V557.9M623.5 468.6V564.5M624.5 466.0V568.7M625.5 471.2V558.3M626.5 475.5V555.0M627.5 468.1V549.8M628.5 469.8V547.4M629.5 485.9V552.5M630.5 484.1V554.2M631.5 475.5V555.8M632.5 477.5V558.7M633.5 457.9V554.5M634.5 468.6V551.6M635.5 469.8V567.2M636.5 476.5V573.0M637.5 482.1V576.9M638.5 484.6V575.7M639.5 488.8V578.3" stroke="#56aee0" stroke-width="1"/></svg>
<svg class="a" style="left:193.1px;top:9px" width="9" height="9"><path d="M0 0 H8 L0 8Z" fill="#fff"/></svg>
<svg class="a" style="left:399.1px;top:9px" width="9" height="9"><path d="M0 0 H8 V8Z" fill="#fff"/></svg>
<svg class="a" style="left:193.1px;top:487px" width="9" height="9"><path d="M0 0 V8 H8Z" fill="#fff"/></svg>
<svg class="a" style="left:399.1px;top:487px" width="9" height="9"><path d="M8 0 V8 H0Z" fill="#fff"/></svg>
</div>
<div class="a" style="left:231px;top:143px;width:789px;height:3px;background:#b7c2d2"></div>
<div class="a" style="left:231px;top:143px;width:2px;height:499px;background:#b9c3d1"></div>

<div id="db" class="a">
<div class="t" style="left:12px;top:1px;font-size:10px;color:#c9d0da">dB</div>
<div class="a" style="left:0;top:26.3px;width:6px;height:1px;background:#e6eaf0"></div>
<div class="t" style="left:12px;top:22.3px;font-size:10px;color:#cdd4de;transform:scaleX(0.9);transform-origin:0 0">0</div>
<div class="a" style="left:0;top:241.7px;width:6px;height:1px;background:#e6eaf0"></div>
<div class="t" style="left:12px;top:237.7px;font-size:10px;color:#cdd4de;transform:scaleX(0.9);transform-origin:0 0">0</div>
<div class="a" style="left:0;top:48.0px;width:6px;height:1px;background:#e6eaf0"></div>
<div class="t" style="left:11px;top:44.0px;font-size:10px;color:#cdd4de;transform:scaleX(0.9);transform-origin:0 0">-2</div>
<div class="a" style="left:0;top:220.0px;width:6px;height:1px;background:#e6eaf0"></div>
<div class="t" style="left:11px;top:216.0px;font-size:10px;color:#cdd4de;transform:scaleX(0.9);transform-origin:0 0">-2</div>
<div class="a" style="left:0;top:66.3px;width:6px;height:1px;background:#e6eaf0"></div>
<div class="t" style="left:11px;top:62.3px;font-size:10px;color:#cdd4de;transform:scaleX(0.9);transform-origin:0 0">-4</div>
<div class="a" style="left:0;top:201.7px;width:6px;height:1px;background:#e6eaf0"></div>
<div class="t" style="left:11px;top:197.7px;font-size:10px;color:#cdd4de;transform:scaleX(0.9);transform-origin:0 0">-4</div>
<div class="a" style="left:0;top:80.5px;width:6px;height:1px;background:#e6eaf0"></div>
<div class="t" style="left:11px;top:76.5px;font-size:10px;color:#cdd4de;transform:scaleX(0.9);transform-origin:0 0">-6</div>
<div class="a" style="left:0;top:187.5px;width:6px;height:1px;background:#e6eaf0"></div>
<div class="t" style="left:11px;top:183.5px;font-size:10px;color:#cdd4de;transform:scaleX(0.9);transform-origin:0 0">-6</div>
<div class="a" style="left:0;top:100.5px;width:6px;height:1px;background:#e6eaf0"></div>
<div class="t" style="left:11px;top:96.5px;font-size:10px;color:#cdd4de;transform:scaleX(0.9);transform-origin:0 0">-10</div>
<div class="a" style="left:0;top:167.5px;width:6px;height:1px;background:#e6eaf0"></div>
<div class="t" style="left:11px;top:163.5px;font-size:10px;color:#cdd4de;transform:scaleX(0.9);transform-origin:0 0">-10</div>
<div class="a" style="left:0;top:117.5px;width:6px;height:1px;background:#e6eaf0"></div>
<div class="t" style="left:11px;top:113.5px;font-size:10px;color:#cdd4de;transform:scaleX(0.9);transform-origin:0 0">-16</div>
<div class="a" style="left:0;top:150.5px;width:6px;height:1px;background:#e6eaf0"></div>
<div class="t" style="left:11px;top:146.5px;font-size:10px;color:#cdd4de;transform:scaleX(0.9);transform-origin:0 0">-16</div>
<div class="a" style="left:0;top:134.0px;width:6px;height:1px;background:#e6eaf0"></div>
<div class="t" style="left:11px;top:130.0px;font-size:10px;color:#cdd4de;transform:scaleX(0.9);transform-origin:0 0">-∞</div>
<div class="a" style="left:0;top:262.8px;width:6px;height:1px;background:#e6eaf0"></div>
<div class="t" style="left:12px;top:258.8px;font-size:10px;color:#cdd4de;transform:scaleX(0.9);transform-origin:0 0">0</div>
<div class="a" style="left:0;top:478.2px;width:6px;height:1px;background:#e6eaf0"></div>
<div class="t" style="left:12px;top:474.2px;font-size:10px;color:#cdd4de;transform:scaleX(0.9);transform-origin:0 0">0</div>
<div class="a" style="left:0;top:284.5px;width:6px;height:1px;background:#e6eaf0"></div>
<div class="t" style="left:11px;top:280.5px;font-size:10px;color:#cdd4de;transform:scaleX(0.9);transform-origin:0 0">-2</div>
<div class="a" style="left:0;top:456.5px;width:6px;height:1px;background:#e6eaf0"></div>
<div class="t" style="left:11px;top:452.5px;font-size:10px;color:#cdd4de;transform:scaleX(0.9);transform-origin:0 0">-2</div>
<div class="a" style="left:0;top:302.8px;width:6px;height:1px;background:#e6eaf0"></div>
<div class="t" style="left:11px;top:298.8px;font-size:10px;color:#cdd4de;transform:scaleX(0.9);transform-origin:0 0">-4</div>
<div class="a" style="left:0;top:438.2px;width:6px;height:1px;background:#e6eaf0"></div>
<div class="t" style="left:11px;top:434.2px;font-size:10px;color:#cdd4de;transform:scaleX(0.9);transform-origin:0 0">-4</div>
<div class="a" style="left:0;top:317.0px;width:6px;height:1px;background:#e6eaf0"></div>
<div class="t" style="left:11px;top:313.0px;font-size:10px;color:#cdd4de;transform:scaleX(0.9);transform-origin:0 0">-6</div>
<div class="a" style="left:0;top:424.0px;width:6px;height:1px;background:#e6eaf0"></div>
<div class="t" style="left:11px;top:420.0px;font-size:10px;color:#cdd4de;transform:scaleX(0.9);transform-origin:0 0">-6</div>
<div class="a" style="left:0;top:337.0px;width:6px;height:1px;background:#e6eaf0"></div>
<div class="t" style="left:11px;top:333.0px;font-size:10px;color:#cdd4de;transform:scaleX(0.9);transform-origin:0 0">-10</div>
<div class="a" style="left:0;top:404.0px;width:6px;height:1px;background:#e6eaf0"></div>
<div class="t" style="left:11px;top:400.0px;font-size:10px;color:#cdd4de;transform:scaleX(0.9);transform-origin:0 0">-10</div>
<div class="a" style="left:0;top:354.0px;width:6px;height:1px;background:#e6eaf0"></div>
<div class="t" style="left:11px;top:350.0px;font-size:10px;color:#cdd4de;transform:scaleX(0.9);transform-origin:0 0">-16</div>
<div class="a" style="left:0;top:387.0px;width:6px;height:1px;background:#e6eaf0"></div>
<div class="t" style="left:11px;top:383.0px;font-size:10px;color:#cdd4de;transform:scaleX(0.9);transform-origin:0 0">-16</div>
<div class="a" style="left:0;top:370.5px;width:6px;height:1px;background:#e6eaf0"></div>
<div class="t" style="left:11px;top:366.5px;font-size:10px;color:#cdd4de;transform:scaleX(0.9);transform-origin:0 0">-∞</div>
<div class="a" style="left:0;top:27.5px;width:3px;height:1px;background:#c9d0da"></div>
<div class="a" style="left:0;top:31.5px;width:3px;height:1px;background:#c9d0da"></div>
<div class="a" style="left:0;top:35.5px;width:3px;height:1px;background:#c9d0da"></div>
<div class="a" style="left:0;top:39.5px;width:3px;height:1px;background:#c9d0da"></div>
<div class="a" style="left:0;top:43.5px;width:3px;height:1px;background:#c9d0da"></div>
<div class="a" style="left:0;top:47.5px;width:3px;height:1px;background:#c9d0da"></div>
<div class="a" style="left:0;top:51.5px;width:3px;height:1px;background:#c9d0da"></div>
<div class="a" style="left:0;top:55.5px;width:3px;height:1px;background:#c9d0da"></div>
<div class="a" style="left:0;top:59.5px;width:3px;height:1px;background:#c9d0da"></div>
<div class="a" style="left:0;top:63.5px;width:3px;height:1px;background:#c9d0da"></div>
<div class="a" style="left:0;top:67.5px;width:3px;height:1px;background:#c9d0da"></div>
<div class="a" style="left:0;top:71.5px;width:3px;height:1px;background:#c9d0da"></div>
<div class="a" style="left:0;top:75.5px;width:3px;height:1px;background:#c9d0da"></div>
<div class="a" style="left:0;top:79.5px;width:3px;height:1px;background:#c9d0da"></div>
<div class="a" style="left:0;top:83.5px;width:3px;height:1px;background:#c9d0da"></div>
<div class="a" style="left:0;top:87.5px;width:3px;height:1px;background:#c9d0da"></div>
<div class="a" style="left:0;top:91.5px;width:3px;height:1px;background:#c9d0da"></div>
<div class="a" style="left:0;top:95.5px;width:3px;height:1px;background:#c9d0da"></div>
<div class="a" style="left:0;top:99.5px;width:3px;height:1px;background:#c9d0da"></div>
<div class="a" style="left:0;top:103.5px;width:3px;height:1px;background:#c9d0da"></div>
<div class="a" style="left:0;top:107.5px;width:3px;height:1px;background:#c9d0da"></div>
<div class="a" style="left:0;top:111.5px;width:3px;height:1px;background:#c9d0da"></div>
<div class="a" style="left:0;top:115.5px;width:3px;height:1px;background:#c9d0da"></div>
<div class="a" style="left:0;top:119.5px;width:3px;height:1px;background:#c9d0da"></div>
<div class="a" style="left:0;top:123.5px;width:3px;height:1px;background:#c9d0da"></div>
<div class="a" style="left:0;top:127.5px;width:3px;height:1px;background:#c9d0da"></div>
<div class="a" style="left:0;top:131.5px;width:3px;height:1px;background:#c9d0da"></div>
<div class="a" style="left:0;top:135.5px;width:3px;height:1px;background:#c9d0da"></div>
<div class="a" style="left:0;top:139.5px;width:3px;height:1px;background:#c9d0da"></div>
<div class="a" style="left:0;top:143.5px;width:3px;height:1px;background:#c9d0da"></div>
<div class="a" style="left:0;top:147.5px;width:3px;height:1px;background:#c9d0da"></div>
<div class="a" style="left:0;top:151.5px;width:3px;height:1px;background:#c9d0da"></div>
<div class="a" style="left:0;top:155.5px;width:3px;height:1px;background:#c9d0da"></div>
<div class="a" style="left:0;top:159.5px;width:3px;height:1px;background:#c9d0da"></div>
<div class="a" style="left:0;top:163.5px;width:3px;height:1px;background:#c9d0da"></div>
<div class="a" style="left:0;top:167.5px;width:3px;height:1px;background:#c9d0da"></div>
<div class="a" style="left:0;top:171.5px;width:3px;height:1px;background:#c9d0da"></div>
<div class="a" style="left:0;top:175.5px;width:3px;height:1px;background:#c9d0da"></div>
<div class="a" style="left:0;top:179.5px;width:3px;height:1px;background:#c9d0da"></div>
<div class="a" style="left:0;top:183.5px;width:3px;height:1px;background:#c9d0da"></div>
<div class="a" style="left:0;top:187.5px;width:3px;height:1px;background:#c9d0da"></div>
<div class="a" style="left:0;top:191.5px;width:3px;height:1px;background:#c9d0da"></div>
<div class="a" style="left:0;top:195.5px;width:3px;height:1px;background:#c9d0da"></div>
<div class="a" style="left:0;top:199.5px;width:3px;height:1px;background:#c9d0da"></div>
<div class="a" style="left:0;top:203.5px;width:3px;height:1px;background:#c9d0da"></div>
<div class="a" style="left:0;top:207.5px;width:3px;height:1px;background:#c9d0da"></div>
<div class="a" style="left:0;top:211.5px;width:3px;height:1px;background:#c9d0da"></div>
<div class="a" style="left:0;top:215.5px;width:3px;height:1px;background:#c9d0da"></div>
<div class="a" style="left:0;top:219.5px;width:3px;height:1px;background:#c9d0da"></div>
<div class="a" style="left:0;top:223.5px;width:3px;height:1px;background:#c9d0da"></div>
<div class="a" style="left:0;top:227.5px;width:3px;height:1px;background:#c9d0da"></div>
<div class="a" style="left:0;top:231.5px;width:3px;height:1px;background:#c9d0da"></div>
<div class="a" style="left:0;top:235.5px;width:3px;height:1px;background:#c9d0da"></div>
<div class="a" style="left:0;top:239.5px;width:3px;height:1px;background:#c9d0da"></div>
<div class="a" style="left:0;top:264.0px;width:3px;height:1px;background:#c9d0da"></div>
<div class="a" style="left:0;top:268.0px;width:3px;height:1px;background:#c9d0da"></div>
<div class="a" style="left:0;top:272.0px;width:3px;height:1px;background:#c9d0da"></div>
<div class="a" style="left:0;top:276.0px;width:3px;height:1px;background:#c9d0da"></div>
<div class="a" style="left:0;top:280.0px;width:3px;height:1px;background:#c9d0da"></div>
<div class="a" style="left:0;top:284.0px;width:3px;height:1px;background:#c9d0da"></div>
<div class="a" style="left:0;top:288.0px;width:3px;height:1px;background:#c9d0da"></div>
<div class="a" style="left:0;top:292.0px;width:3px;height:1px;background:#c9d0da"></div>
<div class="a" style="left:0;top:296.0px;width:3px;height:1px;background:#c9d0da"></div>
<div class="a" style="left:0;top:300.0px;width:3px;height:1px;background:#c9d0da"></div>
<div class="a" style="left:0;top:304.0px;width:3px;height:1px;background:#c9d0da"></div>
<div class="a" style="left:0;top:308.0px;width:3px;height:1px;background:#c9d0da"></div>
<div class="a" style="left:0;top:312.0px;width:3px;height:1px;background:#c9d0da"></div>
<div class="a" style="left:0;top:316.0px;width:3px;height:1px;background:#c9d0da"></div>
<div class="a" style="left:0;top:320.0px;width:3px;height:1px;background:#c9d0da"></div>
<div class="a" style="left:0;top:324.0px;width:3px;height:1px;background:#c9d0da"></div>
<div class="a" style="left:0;top:328.0px;width:3px;height:1px;background:#c9d0da"></div>
<div class="a" style="left:0;top:332.0px;width:3px;height:1px;background:#c9d0da"></div>
<div class="a" style="left:0;top:336.0px;width:3px;height:1px;background:#c9d0da"></div>
<div class="a" style="left:0;top:340.0px;width:3px;height:1px;background:#c9d0da"></div>
<div class="a" style="left:0;top:344.0px;width:3px;height:1px;background:#c9d0da"></div>
<div class="a" style="left:0;top:348.0px;width:3px;height:1px;background:#c9d0da"></div>
<div class="a" style="left:0;top:352.0px;width:3px;height:1px;background:#c9d0da"></div>
<div class="a" style="left:0;top:356.0px;width:3px;height:1px;background:#c9d0da"></div>
<div class="a" style="left:0;top:360.0px;width:3px;height:1px;background:#c9d0da"></div>
<div class="a" style="left:0;top:364.0px;width:3px;height:1px;background:#c9d0da"></div>
<div class="a" style="left:0;top:368.0px;width:3px;height:1px;background:#c9d0da"></div>
<div class="a" style="left:0;top:372.0px;width:3px;height:1px;background:#c9d0da"></div>
<div class="a" style="left:0;top:376.0px;width:3px;height:1px;background:#c9d0da"></div>
<div class="a" style="left:0;top:380.0px;width:3px;height:1px;background:#c9d0da"></div>
<div class="a" style="left:0;top:384.0px;width:3px;height:1px;background:#c9d0da"></div>
<div class="a" style="left:0;top:388.0px;width:3px;height:1px;background:#c9d0da"></div>
<div class="a" style="left:0;top:392.0px;width:3px;height:1px;background:#c9d0da"></div>
<div class="a" style="left:0;top:396.0px;width:3px;height:1px;background:#c9d0da"></div>
<div class="a" style="left:0;top:400.0px;width:3px;height:1px;background:#c9d0da"></div>
<div class="a" style="left:0;top:404.0px;width:3px;height:1px;background:#c9d0da"></div>
<div class="a" style="left:0;top:408.0px;width:3px;height:1px;background:#c9d0da"></div>
<div class="a" style="left:0;top:412.0px;width:3px;height:1px;background:#c9d0da"></div>
<div class="a" style="left:0;top:416.0px;width:3px;height:1px;background:#c9d0da"></div>
<div class="a" style="left:0;top:420.0px;width:3px;height:1px;background:#c9d0da"></div>
<div class="a" style="left:0;top:424.0px;width:3px;height:1px;background:#c9d0da"></div>
<div class="a" style="left:0;top:428.0px;width:3px;height:1px;background:#c9d0da"></div>
<div class="a" style="left:0;top:432.0px;width:3px;height:1px;background:#c9d0da"></div>
<div class="a" style="left:0;top:436.0px;width:3px;height:1px;background:#c9d0da"></div>
<div class="a" style="left:0;top:440.0px;width:3px;height:1px;background:#c9d0da"></div>
<div class="a" style="left:0;top:444.0px;width:3px;height:1px;background:#c9d0da"></div>
<div class="a" style="left:0;top:448.0px;width:3px;height:1px;background:#c9d0da"></div>
<div class="a" style="left:0;top:452.0px;width:3px;height:1px;background:#c9d0da"></div>
<div class="a" style="left:0;top:456.0px;width:3px;height:1px;background:#c9d0da"></div>
<div class="a" style="left:0;top:460.0px;width:3px;height:1px;background:#c9d0da"></div>
<div class="a" style="left:0;top:464.0px;width:3px;height:1px;background:#c9d0da"></div>
<div class="a" style="left:0;top:468.0px;width:3px;height:1px;background:#c9d0da"></div>
<div class="a" style="left:0;top:472.0px;width:3px;height:1px;background:#c9d0da"></div>
<div class="a" style="left:0;top:476.0px;width:3px;height:1px;background:#c9d0da"></div>
<div class="a" style="left:0;top:0;width:1px;height:496px;background:#e6eaf0"></div>
<div class="a" style="left:0;top:518px;width:77px;height:3px;background:#67768d"></div>
<div class="a" style="left:38px;top:16px;width:12px;height:481px;background:#000;border:1px solid #f0f0f0"></div>
<div class="a" style="left:58px;top:16px;width:11px;height:481px;background:#000;border:1px solid #f0f0f0"></div>
</div>
<div id="ruler" class="a">
<div class="a" style="left:195.1px;top:0;width:213.1px;height:22px;background:#859cb8"></div>
<div class="a" style="left:0;top:22px;width:711px;height:3px;background:#67768d"></div>
<svg class="a" style="left:0;top:0" width="711" height="26"><path d="M1 0.5H711" stroke="#e8ecf2"/><path d="M1.0 1V5 M6.8 1V5 M12.6 1V5 M18.4 1V10 M24.2 1V5 M30.0 1V5 M35.8 1V5 M41.6 1V5 M47.3 1V10 M53.1 1V5 M58.9 1V5 M64.7 1V5 M70.5 1V5 M76.3 1V10 M82.1 1V5 M87.9 1V5 M93.7 1V5 M99.5 1V5 M105.3 1V10 M111.1 1V5 M116.9 1V5 M122.7 1V5 M128.4 1V5 M134.2 1V10 M140.0 1V5 M145.8 1V5 M151.6 1V5 M157.4 1V5 M163.2 1V10 M169.0 1V5 M174.8 1V5 M180.6 1V5 M186.4 1V5 M192.2 1V10 M198.0 1V5 M203.8 1V5 M209.6 1V5 M215.3 1V5 M221.1 1V10 M226.9 1V5 M232.7 1V5 M238.5 1V5 M244.3 1V5 M250.1 1V10 M255.9 1V5 M261.7 1V5 M267.5 1V5 M273.3 1V5 M279.1 1V10 M284.9 1V5 M290.7 1V5 M296.4 1V5 M302.2 1V5 M308.0 1V10 M313.8 1V5 M319.6 1V5 M325.4 1V5 M331.2 1V5 M337.0 1V10 M342.8 1V5 M348.6 1V5 M354.4 1V5 M360.2 1V5 M366.0 1V10 M371.8 1V5 M377.5 1V5 M383.3 1V5 M389.1 1V5 M394.9 1V10 M400.7 1V5 M406.5 1V5 M412.3 1V5 M418.1 1V5 M423.9 1V10 M429.7 1V5 M435.5 1V5 M441.3 1V5 M447.1 1V5 M452.9 1V10 M458.7 1V5 M464.4 1V5 M470.2 1V5 M476.0 1V5 M481.8 1V10 M487.6 1V5 M493.4 1V5 M499.2 1V5 M505.0 1V5 M510.8 1V10 M516.6 1V5 M522.4 1V5 M528.2 1V5 M534.0 1V5 M539.8 1V10 M545.5 1V5 M551.3 1V5 M557.1 1V5 M562.9 1V5 M568.7 1V10 M574.5 1V5 M580.3 1V5 M586.1 1V5 M591.9 1V5 M597.7 1V10 M603.5 1V5 M609.3 1V5 M615.1 1V5 M620.9 1V5 M626.6 1V10 M632.4 1V5 M638.2 1V5 M644.0 1V5 M649.8 1V5 M655.6 1V10 M661.4 1V5 M667.2 1V5 M673.0 1V5 M678.8 1V5 M684.6 1V10 M690.4 1V5 M696.2 1V5 M702.0 1V5 M707.7 1V5" stroke="#e8ecf2" stroke-width="1"/></svg>
<div class="t" style="left:2px;top:12px;font-size:10px;color:#d3dae4;transform:scaleX(0.8);transform-origin:0 0">hms</div>
<div class="t" style="left:37.3px;top:12px;width:20px;text-align:center;font-size:10px;color:#d3dae4;transform:scaleX(0.82)">1:10</div>
<div class="t" style="left:66.3px;top:12px;width:20px;text-align:center;font-size:10px;color:#d3dae4;transform:scaleX(0.82)">1:15</div>
<div class="t" style="left:95.3px;top:12px;width:20px;text-align:center;font-size:10px;color:#d3dae4;transform:scaleX(0.82)">1:20</div>
<div class="t" style="left:124.2px;top:12px;width:20px;text-align:center;font-size:10px;color:#d3dae4;transform:scaleX(0.82)">1:25</div>
<div class="t" style="left:153.2px;top:12px;width:20px;text-align:center;font-size:10px;color:#d3dae4;transform:scaleX(0.82)">1:30</div>
<div class="t" style="left:182.2px;top:12px;width:20px;text-align:center;font-size:10px;color:#d3dae4;transform:scaleX(0.82)">1:35</div>
<div class="t" style="left:211.1px;top:12px;width:20px;text-align:center;font-size:10px;color:#d3dae4;transform:scaleX(0.82)">1:40</div>
<div class="t" style="left:240.1px;top:12px;width:20px;text-align:center;font-size:10px;color:#d3dae4;transform:scaleX(0.82)">1:45</div>
<div class="t" style="left:269.1px;top:12px;width:20px;text-align:center;font-size:10px;color:#d3dae4;transform:scaleX(0.82)">1:50</div>
<div class="t" style="left:298.0px;top:12px;width:20px;text-align:center;font-size:10px;color:#d3dae4;transform:scaleX(0.82)">1:55</div>
<div class="t" style="left:327.0px;top:12px;width:20px;text-align:center;font-size:10px;color:#d3dae4;transform:scaleX(0.82)">2:00</div>
<div class="t" style="left:356.0px;top:12px;width:20px;text-align:center;font-size:10px;color:#d3dae4;transform:scaleX(0.82)">2:05</div>
<div class="t" style="left:384.9px;top:12px;width:20px;text-align:center;font-size:10px;color:#d3dae4;transform:scaleX(0.82)">2:10</div>
<div class="t" style="left:413.9px;top:12px;width:20px;text-align:center;font-size:10px;color:#d3dae4;transform:scaleX(0.82)">2:15</div>
<div class="t" style="left:442.9px;top:12px;width:20px;text-align:center;font-size:10px;color:#d3dae4;transform:scaleX(0.82)">2:20</div>
<div class="t" style="left:471.8px;top:12px;width:20px;text-align:center;font-size:10px;color:#d3dae4;transform:scaleX(0.82)">2:25</div>
<div class="t" style="left:500.8px;top:12px;width:20px;text-align:center;font-size:10px;color:#d3dae4;transform:scaleX(0.82)">2:30</div>
<div class="t" style="left:529.8px;top:12px;width:20px;text-align:center;font-size:10px;color:#d3dae4;transform:scaleX(0.82)">2:35</div>
<div class="t" style="left:558.7px;top:12px;width:20px;text-align:center;font-size:10px;color:#d3dae4;transform:scaleX(0.82)">2:40</div>
<div class="t" style="left:587.7px;top:12px;width:20px;text-align:center;font-size:10px;color:#d3dae4;transform:scaleX(0.82)">2:45</div>
<div class="t" style="left:616.6px;top:12px;width:20px;text-align:center;font-size:10px;color:#d3dae4;transform:scaleX(0.82)">2:50</div>
<div class="t" style="left:645.6px;top:12px;width:20px;text-align:center;font-size:10px;color:#d3dae4;transform:scaleX(0.82)">2:55</div>
<div class="t" style="left:674.6px;top:12px;width:20px;text-align:center;font-size:10px;color:#d3dae4;transform:scaleX(0.82)">3:00</div>
</div>
<div id="bottom" class="a">
<!-- transport grid -->
<div class="a" style="left:5px;top:12px;width:128px;height:51px;background:#c3cad6;border:1px solid #c3cad6"></div>
<div class="a" style="left:6px;top:13px;width:24px;height:24px;background:#d6dde8"></div>
<div class="a" style="left:31px;top:13px;width:25px;height:24px;background:#d6dde8"></div>
<div class="a" style="left:57px;top:13px;width:25px;height:24px;background:#d6dde8"></div>
<div class="a" style="left:83px;top:13px;width:24px;height:24px;background:#d6dde8"></div>
<div class="a" style="left:108px;top:13px;width:24px;height:24px;background:#d6dde8"></div>
<div class="a" style="left:6px;top:38px;width:24px;height:24px;background:#d6dde8"></div>
<div class="a" style="left:31px;top:38px;width:25px;height:24px;background:#d6dde8"></div>
<div class="a" style="left:57px;top:38px;width:25px;height:24px;background:#e3e8ef"></div>
<div class="a" style="left:83px;top:38px;width:24px;height:24px;background:#d6dde8"></div>
<div class="a" style="left:108px;top:38px;width:24px;height:24px;background:#d6dde8"></div>
<svg class="a" style="left:5px;top:12px" width="128" height="51">
 <g fill="#3a3f4a" stroke="#3a3f4a">
  <path d="M8 7 L18 12.5 L8 18Z" stroke="none"/>
  <path d="M33 10 H42 V16 H33Z" fill="none" stroke-width="1.6"/><path d="M35 7.5 L37.5 10 L35 12.5" fill="none" stroke-width="1.2"/>
  <path d="M58 8 L66 12.5 L58 17Z" stroke="none"/><rect x="66" y="8" width="2" height="9" stroke="none"/>
  <path d="M88.5 8.5 L82.5 12.5 L88.5 16.5Z M94.5 8.5 L88.5 12.5 L94.5 16.5Z" stroke="none"/>
  <path d="M107.5 8.5 L113.5 12.5 L107.5 16.5Z M113.5 8.5 L119.5 12.5 L113.5 16.5Z" stroke="none"/>
  <rect x="8" y="33" width="9" height="9" stroke="none"/>
  <rect x="34" y="33" width="3" height="9" stroke="none"/><rect x="40" y="33" width="3" height="9" stroke="none"/>
  <rect x="81" y="33" width="2" height="9" stroke="none"/><path d="M89 33.5 L83 37.5 L89 41.5Z M95 33.5 L89 37.5 L95 41.5Z" stroke="none"/>
  <path d="M107 33.5 L113 37.5 L107 41.5Z M113 33.5 L119 37.5 L113 41.5Z" stroke="none"/><rect x="119" y="33" width="2" height="9" stroke="none"/>
 </g>
 <circle cx="63" cy="37.5" r="4.3" fill="#f08070"/>
</svg>
<!-- zoom grid -->
<div class="a" style="left:138px;top:12px;width:103px;height:51px;background:#c3cad6"></div>
<div class="a" style="left:139px;top:13px;width:24px;height:24px;background:#d6dde8"></div>
<div class="a" style="left:164px;top:13px;width:25px;height:24px;background:#d6dde8"></div>
<div class="a" style="left:190px;top:13px;width:25px;height:24px;background:#d6dde8"></div>
<div class="a" style="left:216px;top:13px;width:24px;height:24px;background:#d6dde8"></div>
<div class="a" style="left:139px;top:38px;width:24px;height:24px;background:#d6dde8"></div>
<div class="a" style="left:164px;top:38px;width:25px;height:24px;background:#d6dde8"></div>
<div class="a" style="left:190px;top:38px;width:25px;height:24px;background:#d6dde8"></div>
<div class="a" style="left:216px;top:38px;width:24px;height:24px;background:#d6dde8"></div>
<svg class="a" style="left:138px;top:12px" width="103" height="51">
 <g fill="none" stroke="#3a3f4a" stroke-width="1.6">
  <circle cx="11.5" cy="11.5" r="4.8"/><circle cx="36.3" cy="11.5" r="4.8"/><circle cx="61.6" cy="11" r="4.8"/><circle cx="91.5" cy="11.5" r="4.8"/>
  <circle cx="13.9" cy="37" r="4.8"/><circle cx="36.7" cy="37" r="4.8"/><circle cx="60.5" cy="36.5" r="4.8"/><circle cx="91.5" cy="37" r="4.8"/>
 </g>
 <g fill="none" stroke="#3a3f4a" stroke-width="2.2" stroke-linecap="round">
  <path d="M15 15 L18 18 M39.8 15 L42.8 18 M65.1 14.5 L68.1 17.5 M95 15 L98 18 M17.4 40.5 L20.4 43.5 M40.2 40.5 L43.2 43.5 M64 40 L67 43 M95 40.5 L98 43.5"/>
 </g>
 <g fill="none" stroke="#3a3f4a" stroke-width="1.2">
  <path d="M9 11.5 H14 M11.5 9 V14 M34 11.5 H38.6"/>
  <path d="M6 31.5 H4.5 V42.5 H6 M69.5 31 H71 V42 H69.5" stroke-width="1.5"/>
 </g>
 <g fill="#3a3f4a">
  <path d="M78 10.2 L80.3 6.4 L82.6 10.2Z M78 12.6 L80.3 16.4 L82.6 12.6Z M78 31 L80.3 34.8 L82.6 31Z M78 42.6 L80.3 38.8 L82.6 42.6Z"/><rect x="79.8" y="9" width="1" height="5"/><rect x="79.8" y="34" width="1" height="5.5"/>
  <circle cx="35.3" cy="36" r="0.8"/><circle cx="38.1" cy="36" r="0.8"/><circle cx="35.3" cy="38.6" r="0.8"/><circle cx="38.1" cy="38.6" r="0.8"/>
  <text x="57.5" y="21.5" font-size="4.5" font-family="Liberation Sans" font-weight="bold">100</text>
 </g>
</svg>
<div class="a" style="left:246px;top:4px;width:1px;height:69px;background:#c9ced8"></div>
<!-- time -->
<div class="t" style="left:259px;top:16px;font-size:46px;color:#0a0a0a;letter-spacing:1.4px;transform:scaleX(0.876);transform-origin:0 0">00:01:35.501</div>
<div class="a" style="left:520px;top:4px;width:1px;height:69px;background:#c9ced8"></div>
<!-- selection fields -->
<div class="t" style="left:579px;top:9px;font-size:11px;color:#222;transform:scaleX(0.88);transform-origin:0 0">Start</div>
<div class="t" style="left:646px;top:9px;font-size:11px;color:#222;transform:scaleX(0.85);transform-origin:0 0">End</div>
<div class="t" style="left:715px;top:10px;font-size:11px;color:#222;transform:scaleX(0.86);transform-origin:0 0">Length</div>
<div class="t" style="left:530px;top:24px;font-size:11px;color:#222;transform:scaleX(0.885);transform-origin:0 0">Selection</div>
<div class="t" style="left:549px;top:46px;font-size:11px;color:#222;transform:scaleX(0.85);transform-origin:0 0">View</div>
<div class="fld" style="left:579px;top:23px">00:01:35.501</div>
<div class="fld" style="left:646px;top:23px">00:02:12.282</div>
<div class="fld" style="left:714px;top:23px">00:00:36.781</div>
<div class="fld" style="left:579px;top:45px">00:01:02.034</div>
<div class="fld" style="left:646px;top:45px">00:03:04.376</div>
<div class="fld" style="left:714px;top:45px">00:02:02.341</div>

</div>
<div id="status" class="a">
  <div class="a" style="left:556px;top:5px;width:1px;height:16px;background:#d9dce2"></div>
  <div class="t" style="left:562px;top:8px;font-size:11px;color:#222;transform:scaleX(0.89);transform-origin:0 0">44100 Hz, 16-bit, 2 Channels</div>
  <div class="a" style="left:845px;top:5px;width:1px;height:16px;background:#d9dce2"></div>
  <div class="t" style="left:851px;top:8px;font-size:11px;color:#222;transform:scaleX(0.89);transform-origin:0 0">36.589 Mb</div>
  <div class="a" style="left:933px;top:5px;width:1px;height:16px;background:#d9dce2"></div>
  <div class="t" style="left:939px;top:8px;font-size:11px;color:#222;transform:scaleX(0.927);transform-origin:0 0">00:03:37.496</div>
</div>
<div class="a" style="left:1018px;top:668px;width:1px;height:96px;background:#dadde3"></div>
</body></html>
